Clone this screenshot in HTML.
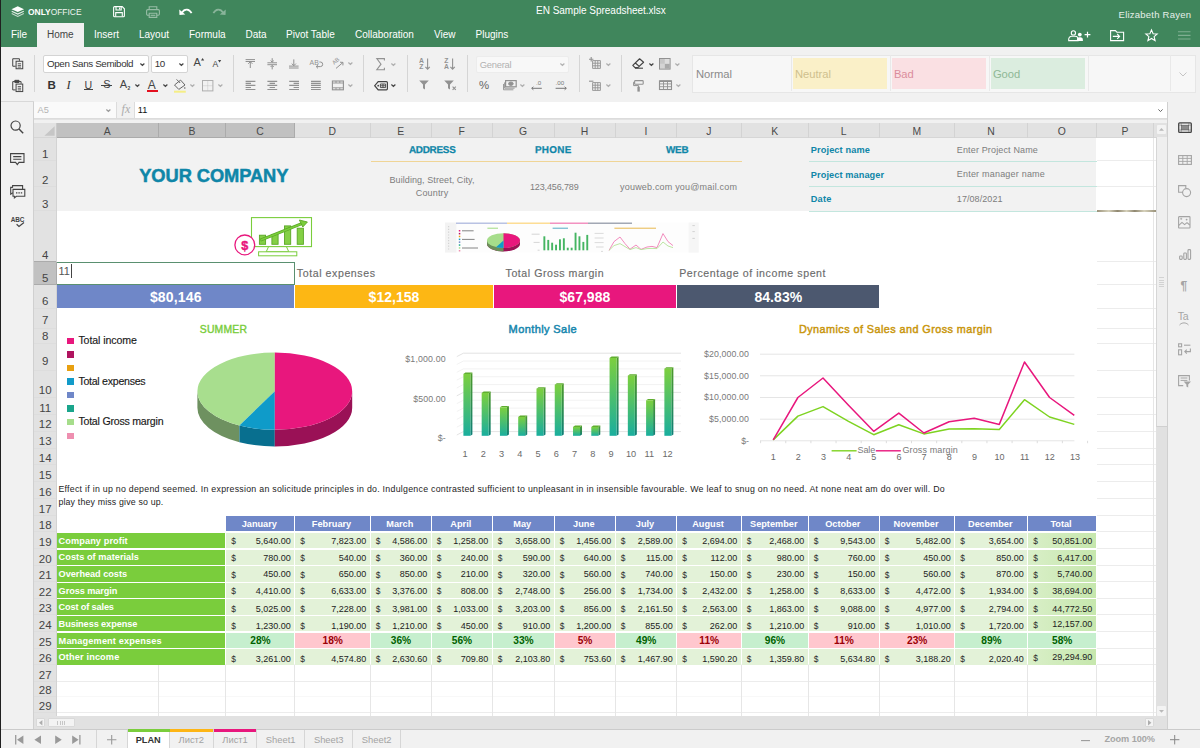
<!DOCTYPE html>
<html><head><meta charset="utf-8"><title>EN Sample Spreadsheet.xlsx</title>
<style>
*{box-sizing:border-box;margin:0;padding:0}
html,body{width:1200px;height:748px;overflow:hidden}
body{position:relative;background:#f1f1f1;font-family:"Liberation Sans",sans-serif;font-size:10px;color:#444;-webkit-font-smoothing:antialiased}
.abs{position:absolute}
.t{position:absolute;white-space:nowrap;line-height:1}
svg{position:absolute;overflow:visible}

#hdr{left:0;top:0;width:1200px;height:47px;background:#40865c}
#edge{left:0;top:0;width:1.3px;height:748px;background:#202020;z-index:50}
.tab{color:#fff;font-size:10px;top:30.1px}
#hometab{left:37px;top:23px;width:46.5px;height:24px;background:#f1f1f1}
#tb{left:0;top:47px;width:1200px;height:54.5px;background:#f1f1f1;border-bottom:1px solid #d8d8d8}
.sep{width:1px;background:#d5d5d5;top:55px;height:37px}
.box{background:#fff;border:1px solid #d4d4d4;border-radius:2px}
.dis{opacity:.55}
.dis2{opacity:.38}
.dis3{opacity:.44}
#fbar{left:34px;top:101px;width:1166px;height:22px;background:#f1f1f1}
#lsb{left:0;top:101.6px;width:34px;height:627.4px;background:#f1f1f1;border-right:1px solid #d0d0d0}
#rsb{left:1167px;top:101.6px;width:33px;height:627.4px;background:#f1f1f1;border-left:1px solid #d0d0d0}
#sbar{left:0;top:729px;width:1200px;height:19px;background:#f1f1f1;border-top:1px solid #cbcbcb}
.stab{top:730px;height:18px;font-size:9.4px;color:#a3a3a3;text-align:center;line-height:20.6px;border-right:1px solid #d6d6d6}

#sheet{left:34px;top:123px;width:1122px;height:594px;background:#fff;overflow:hidden}
.ch{top:123px;height:15px;background:#e2e2e2;border-right:1px solid #d3d3d3;border-bottom:1px solid #cfcfcf}
.rh{left:34px;width:22.9px;background:#e3e3e3;border-bottom:1px solid #dddddd;border-right:1px solid #d3d3d3}
.hl{height:1px;background:#ececec}
.vl{width:1px;background:#e6e6e6}
.c{position:absolute}

</style></head>
<body>
<div class="abs" id="hdr"></div>
<svg style="left:11px;top:5.5px;" width="13.5" height="11" viewBox="0 0 13.5 11"><path d="M6.75 0.3 L13 3.2 L6.75 6.1 L0.5 3.2 Z" fill="#fff"/><path d="M0.7 5.3 L6.75 8.1 L12.8 5.3" fill="none" stroke="#fff" stroke-opacity=".85" stroke-width="1.1"/><path d="M0.7 7.6 L6.75 10.4 L12.8 7.6" fill="none" stroke="#fff" stroke-opacity=".7" stroke-width="1.1"/></svg>
<div class="t" style="left:27.5px;top:6.9px;font-size:9.7px;color:#fff;transform-origin:0 0;transform:scaleX(.87)"><b>ONLY</b><span style="opacity:.92">OFFICE</span></div>
<svg style="left:112.8px;top:5.7px;" width="12" height="11.4" viewBox="0 0 12 11.4"><path d="M0.6 1.6 a1 1 0 0 1 1-1 H9.2 L11.4 2.8 V9.8 a1 1 0 0 1-1 1 H1.6 a1 1 0 0 1-1-1Z" fill="none" stroke="#fff" stroke-width="1.1"/><path d="M3 0.8 V4 H8.2 V0.8 M6.6 1.4 V3.2" fill="none" stroke="#fff" stroke-width="1.1"/><path d="M2.7 10.6 V6.6 H9.3 V10.6" fill="none" stroke="#fff" stroke-width="1.1"/></svg>
<svg style="left:145.5px;top:5.5px;" width="14" height="12" viewBox="0 0 14 12"><g opacity=".45" fill="none" stroke="#fff" stroke-width="1.1"><path d="M3.2 3.6 V0.8 H10.8 V3.6"/><rect x="0.6" y="3.6" width="12.8" height="5.6" rx="1.2"/><path d="M3.2 7.2 H10.8 V11.4 H3.2 Z" fill="#40865c"/><path d="M4.6 9.3 H9.4"/></g></svg>
<svg style="left:179.3px;top:8.4px;" width="13" height="7.2" viewBox="0 0 13 7.2"><path d="M0.2 1.4 L0.5 6.9 L6.3 6.6 Z" fill="#fff"/><path d="M3 4.6 C5.6 0.2 10.4 0.8 12.6 5.2" fill="none" stroke="#fff" stroke-width="1.7"/></svg>
<svg style="left:213.4px;top:8.4px;" width="13" height="7.2" viewBox="0 0 13 7.2"><g transform="translate(13,0) scale(-1,1)" opacity=".38"><path d="M0.2 1.4 L0.5 6.9 L6.3 6.6 Z" fill="#fff"/><path d="M3 4.6 C5.6 0.2 10.4 0.8 12.6 5.2" fill="none" stroke="#fff" stroke-width="1.7"/></g></svg>
<div class="t" style="left:536.00px;top:6.04px;font-size:10px;color:#fff;letter-spacing:-0.010px;">EN Sample Spreadsheet.xlsx</div>
<div class="t" style="left:1118.60px;top:10.06px;font-size:9.5px;color:#e6efe9;letter-spacing:0.228px;">Elizabeth Rayen</div>
<svg style="left:1068px;top:29.5px;" width="23" height="11.5" viewBox="0 0 23 11.5"><g fill="none" stroke="#fff" stroke-width="1.1"><circle cx="5.4" cy="2.9" r="2.1"/><path d="M0.7 10.6 V9.3 a3 3 0 0 1 3-3 H7.1 a3 3 0 0 1 3 3 V10.6 Z"/></g><circle cx="11.8" cy="4.6" r="1.9" fill="#fff"/><path d="M8.9 11 V9.9 a2.6 2.6 0 0 1 2.6-2.6 h0.8 a2.6 2.6 0 0 1 2.6 2.6 V11 Z" fill="#fff"/><path d="M19.5 1.8 V7.6 M16.6 4.7 H22.4" stroke="#fff" stroke-width="1.2"/></svg>
<svg style="left:1110px;top:29.8px;" width="14.5" height="11.5" viewBox="0 0 14.5 11.5"><path d="M0.6 10.6 V0.6 H5.4 L6.9 2.2 H13.6 V10.6 Z" fill="none" stroke="#fff" stroke-width="1.1"/><path d="M2.8 6.4 H9.4 M7.2 4 L9.6 6.4 L7.2 8.8" fill="none" stroke="#fff" stroke-width="1.1"/></svg>
<svg style="left:1144.5px;top:28.8px;" width="13" height="12.4" viewBox="0 0 13 12.4"><path d="M6.5 0.9 L8.1 4.7 L12.2 5 L9.1 7.7 L10.1 11.7 L6.5 9.5 L2.9 11.7 L3.9 7.7 L0.8 5 L4.9 4.7 Z" fill="none" stroke="#fff" stroke-width="1.1" stroke-linejoin="miter"/></svg>
<svg style="left:1178px;top:31px;" width="12.5" height="9" viewBox="0 0 12.5 9"><path d="M0 0.8 H12.5 M0 4.4 H12.5 M0 8 H12.5" stroke="#fff" stroke-opacity=".33" stroke-width="1.1"/></svg>
<div class="abs" id="hometab"></div>
<div class="t tab" style="left:11px;color:#fff">File</div>
<div class="t tab" style="left:47px;color:#444">Home</div>
<div class="t tab" style="left:94px;color:#fff">Insert</div>
<div class="t tab" style="left:139px;color:#fff">Layout</div>
<div class="t tab" style="left:189px;color:#fff">Formula</div>
<div class="t tab" style="left:245.5px;color:#fff">Data</div>
<div class="t tab" style="left:286px;color:#fff">Pivot Table</div>
<div class="t tab" style="left:355px;color:#fff">Collaboration</div>
<div class="t tab" style="left:434px;color:#fff">View</div>
<div class="t tab" style="left:475.5px;color:#fff">Plugins</div>
<div class="abs" id="tb"></div>
<div class="abs sep" style="left:34px"></div>
<div class="abs sep" style="left:233.2px"></div>
<div class="abs sep" style="left:363.2px"></div>
<div class="abs sep" style="left:406.8px"></div>
<div class="abs sep" style="left:466.6px"></div>
<div class="abs sep" style="left:578.6px"></div>
<div class="abs sep" style="left:621.2px"></div>
<svg style="left:9.07px;top:55.27px;" width="16.66" height="16.66" viewBox="0 0 20 20"><g fill="none" stroke="#444" stroke-width="1.2"><path d="M12.5 7 V4.5 H4.5 V13.5 H8"/><rect x="8.5" y="7.5" width="8" height="9" fill="#f1f1f1"/><path d="M10.5 10.5h4M10.5 12.5h4M10.5 14.5h4" stroke-width="1"/></g></svg>
<svg style="left:9.07px;top:76.67px;" width="16.66" height="16.66" viewBox="0 0 20 20"><g fill="none" stroke="#444" stroke-width="1.2"><path d="M8 15.5 H4.5 V5.5 H14.5 V8"/><path d="M7 4 H12 V6.5 H7Z" fill="#444"/><rect x="8.5" y="8.5" width="8" height="9" fill="#f1f1f1"/><path d="M10.5 11.5h4M10.5 13.5h4M10.5 15.5h4" stroke-width="1"/></g></svg>
<div class="abs box" style="left:43.4px;top:55.4px;width:105.2px;height:17.4px"></div>
<div class="t" style="left:47.00px;top:59.40px;font-size:9.8px;color:#333;letter-spacing:-0.356px;">Open Sans Semibold</div>
<svg style="left:140.2px;top:63.0px;" width="4.8" height="3.2" viewBox="0 0 4.8 3.2"><path d="M0.4 0.5 L2.4 2.5 L4.4 0.5" fill="none" stroke="#444" stroke-width="1.2"/></svg>
<div class="abs box" style="left:151.4px;top:55.4px;width:36.8px;height:17.4px"></div>
<div class="t" style="left:154.80px;top:59.40px;font-size:9.8px;color:#333;letter-spacing:-0.450px;">10</div>
<svg style="left:179.1px;top:63.0px;" width="4.8" height="3.2" viewBox="0 0 4.8 3.2"><path d="M0.4 0.5 L2.4 2.5 L4.4 0.5" fill="none" stroke="#444" stroke-width="1.2"/></svg>
<div class="t" style="left:193.40px;top:57.49px;font-size:11px;color:#444;">A</div>
<svg style="left:200.6px;top:58.4px;" width="3.2" height="2.4" viewBox="0 0 3.2 2.4"><path d="M0 2.4 L1.6 0 L3.2 2.4Z" fill="#444"/></svg>
<div class="t" style="left:212.60px;top:59.52px;font-size:8.6px;color:#444;">A</div>
<svg style="left:218.4px;top:59.6px;" width="3.2" height="2.4" viewBox="0 0 3.2 2.4"><path d="M0 0 L1.6 2.4 L3.2 0Z" fill="#444"/></svg>
<div class="t" style="left:47.4px;top:79.4px;font-size:11.6px;font-weight:bold;color:#333">B</div>
<div class="t" style="left:66.6px;top:78.8px;font-size:12.4px;font-style:italic;font-family:'Liberation Serif',serif;color:#333">I</div>
<div class="t" style="left:84.4px;top:80px;font-size:10.6px;color:#444">U</div>
<div class="abs" style="left:84px;top:89.2px;width:8.8px;height:1px;background:#444"></div>
<div class="t" style="left:103.2px;top:79.4px;font-size:11px;color:#444">S</div>
<div class="abs" style="left:101.4px;top:84.8px;width:10.6px;height:1px;background:#444"></div>
<div class="t" style="left:119.8px;top:79.4px;font-size:11px;color:#444">A</div>
<div class="t" style="left:127.4px;top:86px;font-size:5px;font-weight:bold;color:#444">2</div>
<svg style="left:135.0px;top:84.1px;" width="4.8" height="3.2" viewBox="0 0 4.8 3.2"><path d="M0.4 0.5 L2.4 2.5 L4.4 0.5" fill="none" stroke="#444" stroke-width="1.2"/></svg>
<div class="t" style="left:147.8px;top:78.6px;font-size:12px;color:#444">A</div>
<div class="abs" style="left:146.6px;top:89.6px;width:11.4px;height:2.4px;background:#e3101f"></div>
<svg style="left:162.79999999999998px;top:84.1px;" width="4.8" height="3.2" viewBox="0 0 4.8 3.2"><path d="M0.4 0.5 L2.4 2.5 L4.4 0.5" fill="none" stroke="#444" stroke-width="1.2"/></svg>
<svg style="left:174px;top:78.6px;" width="14" height="14" viewBox="0 0 14 14"><g opacity=".8"><path d="M6.6 1.1 L11 6 L4.8 10.4 L0.5 6 Z" fill="none" stroke="#444" stroke-width="1"/><path d="M2.6 0.4 L6.2 4" stroke="#444" stroke-width="1"/><circle cx="10.8" cy="9" r=".8" fill="#444"/></g><rect x="0" y="11.7" width="11.8" height="2" fill="#f5ee86"/></svg>
<svg class="dis2" style="left:190.4px;top:84.1px;" width="4.8" height="3.2" viewBox="0 0 4.8 3.2"><path d="M0.4 0.5 L2.4 2.5 L4.4 0.5" fill="none" stroke="#444" stroke-width="1.2"/></svg>
<svg style="left:202.2px;top:79.8px;" width="11.4" height="11.4" viewBox="0 0 11.4 11.4"><g class="dis2" fill="none" stroke="#444"><rect x="0.5" y="0.5" width="10.4" height="10.4" stroke-width="1"/><path d="M5.7 0.5V10.9M0.5 5.7H10.9" stroke-width=".6" opacity=".5"/></g></svg>
<svg class="dis2" style="left:217.79999999999998px;top:84.1px;" width="4.8" height="3.2" viewBox="0 0 4.8 3.2"><path d="M0.4 0.5 L2.4 2.5 L4.4 0.5" fill="none" stroke="#444" stroke-width="1.2"/></svg>
<svg style="left:240px;top:56px;" width="115" height="38" viewBox="240 56 115 38"><g class="dis" stroke="#444" fill="none" stroke-width="1"><path d="M245.6 59.6H255M245.6 61.5H255M250.3 61.5V68M248.2 63.8L250.3 61.7L252.4 63.8"/><path d="M267.4 62.8H277M267.4 64.7H277M272.2 58.2V62M270.6 60.6L272.2 62.2L273.8 60.6M272.2 69.4V65.6M270.6 67L272.2 65.4L273.8 67"/><path d="M289 66.1H298.6M289 68H298.6M293.8 59.4V65.6M291.7 63.6L293.8 65.7L295.9 63.6"/><text x="309.6" y="64.6" font-size="6.9" font-family="Liberation Sans" fill="#444" stroke="none">AB</text><path d="M319.4 62H320.4a2.3 2.3 0 0 1 0 4.6H316.4M318 64.8L316.2 66.6L318 68.4"/><text transform="translate(334.2,65) rotate(-42)" font-size="5.8" font-family="Liberation Sans" fill="#444" stroke="none">AB</text><path d="M336 68.4L342.8 62.6M340 62.2L343 62.4L342.9 65.4"/><path d="M245.6 81.3H255.4M245.6 83.35H251M245.6 85.4H255.4M245.6 87.45H251M245.6 89.5H255.4" stroke-width="1.15"/><path d="M267.4 81.3H277.2M269.6 83.35H275M267.4 85.4H277.2M269.6 87.45H275M267.4 89.5H277.2" stroke-width="1.15"/><path d="M289.2 81.3H299M293.6 83.35H299M289.2 85.4H299M293.6 87.45H299M289.2 89.5H299" stroke-width="1.15"/><path d="M311 81.3H320.8M311 83.35H320.8M311 85.4H320.8M311 87.45H320.8M311 89.5H320.8" stroke-width="1.15"/><rect x="332.4" y="81" width="11" height="8.8" stroke-width="1.1"/><path d="M332.4 83H343.4M332.4 87.8H343.4M336 81V83M339.8 81V83M336 87.8V89.8M339.8 87.8V89.8" stroke-width=".9"/></g></svg>
<svg class="dis2" style="left:347.6px;top:62.3px;" width="4.8" height="3.2" viewBox="0 0 4.8 3.2"><path d="M0.4 0.5 L2.4 2.5 L4.4 0.5" fill="none" stroke="#444" stroke-width="1.2"/></svg>
<svg class="dis2" style="left:347.6px;top:83.9px;" width="4.8" height="3.2" viewBox="0 0 4.8 3.2"><path d="M0.4 0.5 L2.4 2.5 L4.4 0.5" fill="none" stroke="#444" stroke-width="1.2"/></svg>
<svg style="left:376.4px;top:58px;" width="9" height="12.4" viewBox="0 0 9 12.4"><path class="dis" d="M8.4 2.6V0.6H0.8L5 6.2L0.8 11.8H8.4V9.8" fill="none" stroke="#444" stroke-width="1.1"/></svg>
<svg class="dis2" style="left:390.8px;top:62.7px;" width="4.8" height="3.2" viewBox="0 0 4.8 3.2"><path d="M0.4 0.5 L2.4 2.5 L4.4 0.5" fill="none" stroke="#444" stroke-width="1.2"/></svg>
<svg style="left:374.4px;top:80.6px;" width="14" height="9.4" viewBox="0 0 14 9.4"><path d="M4.2 0.6H12.4a1 1 0 0 1 1 1V7.8a1 1 0 0 1-1 1H4.2L0.7 4.7Z" fill="none" stroke="#444" stroke-width="1.2"/><circle cx="4.2" cy="4.7" r=".9" fill="#444"/><path d="M6.4 3H11.6V6.6H6.4Z M6.4 4.8H11.6 M9 3V6.6" fill="none" stroke="#444" stroke-width=".9"/></svg>
<svg style="left:390.8px;top:84.1px;" width="4.8" height="3.2" viewBox="0 0 4.8 3.2"><path d="M0.4 0.5 L2.4 2.5 L4.4 0.5" fill="none" stroke="#444" stroke-width="1.2"/></svg>
<svg style="left:418.6px;top:57.6px;" width="12" height="12.6" viewBox="0 0 12 12.6"><g class="dis"><text x="0" y="5.3" font-size="6.8" font-weight="bold" font-family="Liberation Sans" fill="#444">A</text><text x="0.2" y="11.4" font-size="6.8" font-weight="bold" font-family="Liberation Sans" fill="#444">Z</text><path d="M8.6 0.4V11M6.4 8.8L8.6 11.2L10.8 8.8" fill="none" stroke="#444" stroke-width="1.1"/></g></svg>
<svg style="left:444.4px;top:57.6px;" width="12" height="12.6" viewBox="0 0 12 12.6"><g class="dis"><text x="0.2" y="5.3" font-size="6.8" font-weight="bold" font-family="Liberation Sans" fill="#444">Z</text><text x="0" y="11.4" font-size="6.8" font-weight="bold" font-family="Liberation Sans" fill="#444">A</text><path d="M8.6 0.4V11M6.4 8.8L8.6 11.2L10.8 8.8" fill="none" stroke="#444" stroke-width="1.1"/></g></svg>
<svg style="left:419.4px;top:80.4px;" width="10" height="9.6" viewBox="0 0 10 9.6"><path class="dis" d="M0.2 0.4H9.8L6 4.6V9.4L4 8.2V4.6Z" fill="#444"/></svg>
<svg style="left:444.2px;top:80.4px;" width="13" height="10.4" viewBox="0 0 13 10.4"><g class="dis"><path d="M0.2 0.4H9.8L6 4.6V9.4L4 8.2V4.6Z" fill="#444"/><path d="M8.6 6.6L11.8 9.8M11.8 6.6L8.6 9.8" stroke="#444" stroke-width="1.1"/></g></svg>
<div class="abs box" style="left:476.4px;top:55.6px;width:92.8px;height:17px;background:#f8f8f8;border-color:#ececec"></div>
<div class="t" style="left:479.80px;top:59.54px;font-size:9.4px;color:#444;letter-spacing:-0.263px;opacity:.4;">General</div>
<svg class="dis2" style="left:560.4px;top:63.099999999999994px;" width="4.8" height="3.2" viewBox="0 0 4.8 3.2"><path d="M0.4 0.5 L2.4 2.5 L4.4 0.5" fill="none" stroke="#444" stroke-width="1.2"/></svg>
<div class="t" style="left:479.00px;top:79.95px;font-size:11.4px;color:#666;">%</div>
<svg style="left:503.2px;top:80.2px;" width="13" height="10.4" viewBox="0 0 13 10.4"><g class="dis" fill="none" stroke="#444" stroke-width="1"><rect x="2.6" y="0.6" width="10.6" height="6.2" stroke-width="1.2"/><path d="M1.6 2.4V8.2H11.6M0.5 4V9.8H10.4" stroke-width=".9"/><ellipse cx="7.9" cy="3.7" rx="2.3" ry="1.7" fill="#444"/></g></svg>
<svg class="dis2" style="left:520.2px;top:84.1px;" width="4.8" height="3.2" viewBox="0 0 4.8 3.2"><path d="M0.4 0.5 L2.4 2.5 L4.4 0.5" fill="none" stroke="#444" stroke-width="1.2"/></svg>
<svg style="left:531px;top:79.6px;" width="12" height="11" viewBox="0 0 12 11"><g opacity=".7"><text x="5" y="5.4" font-size="6.2" font-family="Liberation Sans" fill="#444">.0</text><path d="M10.8 8.3H0.8M2.4 6.8L0.7 8.3L2.4 9.8" fill="none" stroke="#444" stroke-width="1"/></g></svg>
<svg style="left:555.4px;top:79.6px;" width="13" height="11" viewBox="0 0 13 11"><g opacity=".7"><text x="0.6" y="5.4" font-size="6.2" font-family="Liberation Sans" fill="#444">.00</text><path d="M0.6 8.3H11.2M9.6 6.8L11.3 8.3L9.6 9.8" fill="none" stroke="#444" stroke-width="1"/></g></svg>
<svg style="left:588.8px;top:56.9px;" width="12" height="12" viewBox="0 0 12 12"><g class="dis"><path d="M3.6 3.6H11.4V11.4H3.6ZM3.6 6.2H11.4M3.6 8.8H11.4M6.2 3.6V11.4M8.8 3.6V11.4" fill="none" stroke="#444" stroke-width=".9"/><path d="M0 2.2H4.4M2.2 0V4.4" stroke="#444" stroke-width="1.1"/></g></svg>
<svg class="dis2" style="left:605.8000000000001px;top:62.7px;" width="4.8" height="3.2" viewBox="0 0 4.8 3.2"><path d="M0.4 0.5 L2.4 2.5 L4.4 0.5" fill="none" stroke="#444" stroke-width="1.2"/></svg>
<svg style="left:588.8px;top:78.5px;" width="12" height="12" viewBox="0 0 12 12"><g class="dis"><path d="M3.6 3.6H11.4V11.4H3.6ZM3.6 6.2H11.4M3.6 8.8H11.4M6.2 3.6V11.4M8.8 3.6V11.4" fill="none" stroke="#444" stroke-width=".9"/><path d="M0 2.2H4.4" stroke="#444" stroke-width="1.1"/></g></svg>
<svg class="dis2" style="left:605.8000000000001px;top:84.1px;" width="4.8" height="3.2" viewBox="0 0 4.8 3.2"><path d="M0.4 0.5 L2.4 2.5 L4.4 0.5" fill="none" stroke="#444" stroke-width="1.2"/></svg>
<svg style="left:632.4px;top:58.2px;" width="12.4" height="11" viewBox="0 0 12.4 11"><path d="M7.6 0.8L11.6 4.2L5.8 9.6H3L0.8 7.4Z M3.4 5 L7.2 8.4" fill="none" stroke="#444" stroke-width="1.2" stroke-linejoin="round"/><path d="M3 10.2H11" stroke="#444" stroke-width="1.1"/></svg>
<svg style="left:649.0px;top:62.900000000000006px;" width="4.8" height="3.2" viewBox="0 0 4.8 3.2"><path d="M0.4 0.5 L2.4 2.5 L4.4 0.5" fill="none" stroke="#444" stroke-width="1.2"/></svg>
<svg style="left:659.2px;top:58px;" width="11.6" height="11.6" viewBox="0 0 11.6 11.6"><g class="dis"><rect x="0.5" y="0.5" width="10.6" height="10.6" fill="none" stroke="#444"/><rect x="1" y="1" width="4.8" height="4.8" fill="#444" opacity=".45"/><rect x="5.8" y="1" width="4.8" height="4.8" fill="#444" opacity=".2"/><rect x="5.8" y="5.8" width="4.8" height="4.8" fill="#444" opacity=".75"/><rect x="1" y="5.8" width="4.8" height="4.8" fill="#444" opacity=".3"/></g></svg>
<svg class="dis2" style="left:675.2px;top:62.900000000000006px;" width="4.8" height="3.2" viewBox="0 0 4.8 3.2"><path d="M0.4 0.5 L2.4 2.5 L4.4 0.5" fill="none" stroke="#444" stroke-width="1.2"/></svg>
<svg style="left:633.4px;top:79.6px;" width="11" height="12" viewBox="0 0 11 12"><g class="dis"><rect x="1.6" y="0.6" width="8.6" height="3.6" rx=".8" fill="none" stroke="#444" stroke-width="1.1"/><path d="M1.6 2.2H0.6V5.6H5.6V7" fill="none" stroke="#444" stroke-width="1"/><rect x="4.4" y="6.8" width="2.4" height="4.8" fill="#444"/></g></svg>
<svg style="left:658.6px;top:80.4px;" width="13" height="10" viewBox="0 0 13 10"><g class="dis" fill="none" stroke="#444"><rect x="0.5" y="0.9" width="12" height="8.6" stroke-width="1.1"/><path d="M0.5 1.2H12.5" stroke-width="1.6"/><path d="M0.5 3.9H12.5M0.5 6.7H12.5M4.5 0.9V9.5M8.5 0.9V9.5" stroke-width=".9"/></g></svg>
<svg class="dis2" style="left:675.6px;top:84.1px;" width="4.8" height="3.2" viewBox="0 0 4.8 3.2"><path d="M0.4 0.5 L2.4 2.5 L4.4 0.5" fill="none" stroke="#444" stroke-width="1.2"/></svg>
<div class="abs" style="left:691.5px;top:54.8px;width:504.5px;height:38px;background:#f7f7f7;border:1px solid #e6e6e6"></div>
<div class="abs" style="left:790.6px;top:55px;width:1px;height:36px;background:#e9e9e9"></div>
<div class="t" style="left:695.90px;top:68.82px;font-size:11.2px;color:#8a8a8a;">Normal</div>
<div class="abs" style="left:889.6px;top:55px;width:1px;height:36px;background:#e9e9e9"></div>
<div class="abs" style="left:793px;top:58.4px;width:94.0px;height:31px;background:#faf0c8"></div>
<div class="t" style="left:794.90px;top:68.82px;font-size:11.2px;color:#cfc08e;">Neutral</div>
<div class="abs" style="left:988.6px;top:55px;width:1px;height:36px;background:#e9e9e9"></div>
<div class="abs" style="left:892px;top:58.4px;width:94.0px;height:31px;background:#fae0e3"></div>
<div class="t" style="left:893.90px;top:68.82px;font-size:11.2px;color:#da8d9c;">Bad</div>
<div class="abs" style="left:1087.6px;top:55px;width:1px;height:36px;background:#e9e9e9"></div>
<div class="abs" style="left:991px;top:58.4px;width:94.0px;height:31px;background:#dbeddf"></div>
<div class="t" style="left:992.90px;top:68.82px;font-size:11.2px;color:#8fb896;">Good</div>
<div class="abs" style="left:1170px;top:55px;width:1px;height:36px;background:#e9e9e9"></div>
<svg style="left:1178.5px;top:72px;" width="8" height="5" viewBox="0 0 8 5"><path d="M0.5 0.5L4 4L7.5 0.5" fill="none" stroke="#c4c4c4" stroke-width="1"/></svg>
<div class="abs" id="fbar"></div>
<div class="abs" style="left:34px;top:102.4px;width:82px;height:16.2px;background:#fafafa;border-bottom:1px solid #dcdcdc"></div>
<div class="t" style="left:37.60px;top:105.91px;font-size:9.2px;color:#b4b4b4;">A5</div>
<svg style="left:106.0px;top:109.1px;" width="4.8" height="3.2" viewBox="0 0 4.8 3.2"><path d="M0.4 0.5 L2.4 2.5 L4.4 0.5" fill="none" stroke="#9a9a9a" stroke-width="1.2"/></svg>
<div class="abs" style="left:116px;top:102.4px;width:18.6px;height:16.2px;background:#f1f1f1;border-left:1px solid #dcdcdc;border-right:1px solid #dcdcdc;border-bottom:1px solid #dcdcdc"></div>
<div class="t" style="left:121.6px;top:103.4px;font-size:12px;font-style:italic;font-family:'Liberation Serif',serif;color:#ababab">fx</div>
<div class="abs" style="left:134.6px;top:102.4px;width:1032.4px;height:16.2px;background:#fff;border-bottom:1px solid #dcdcdc"></div>
<div class="t" style="left:137.80px;top:105.91px;font-size:9.2px;color:#111;">11</div>
<svg style="left:1158.2px;top:109px;" width="5" height="3.2" viewBox="0 0 5 3.2"><path d="M0.4 0.4L2.5 2.6L4.6 0.4" fill="none" stroke="#666" stroke-width="1"/></svg>
<div class="abs" style="left:34px;top:119px;width:1133px;height:1px;background:#e2e2e2"></div>
<div class="abs" id="lsb"></div>
<div class="abs" id="rsb"></div>
<svg style="left:10.4px;top:120.4px;" width="14" height="14" viewBox="0 0 14 14"><circle cx="5.6" cy="5.6" r="4.6" fill="none" stroke="#444" stroke-width="1.2"/><path d="M9 9L13.2 13.2" stroke="#444" stroke-width="1.4"/></svg>
<svg style="left:10px;top:152.6px;" width="14.6" height="13" viewBox="0 0 14.6 13"><path d="M0.6 0.6H14V9.4H9L7.3 11.6L5.6 9.4H0.6Z" fill="none" stroke="#444" stroke-width="1.1"/><path d="M3.2 3.6H11.4M3.2 6.2H11.4" stroke="#444" stroke-width="1.1"/></svg>
<svg style="left:9.6px;top:184.6px;" width="15.4" height="13" viewBox="0 0 15.4 13"><path d="M2.6 2.6V0.6H12.6V7" fill="none" stroke="#444" stroke-width="1.1"/><path d="M0.6 0.6" /><path d="M0.6 1 V9 H2.4" fill="none" stroke="#444" stroke-width="1.1" opacity="0"/><path d="M3 4.4H14.8V11.2H6.4L4.4 12.8V11.2H3Z" fill="#f1f1f1" stroke="#444" stroke-width="1.1"/><path d="M6 7.8h1.4M8.4 7.8h1.4M10.8 7.8h1.4" stroke="#444" stroke-width="1.3"/><path d="M2.8 2.4H0.7V9.2L2.8 7.8" fill="none" stroke="#444" stroke-width="1.1"/></svg>
<div class="t" style="left:10.8px;top:217.2px;font-size:6.4px;font-weight:bold;color:#444;letter-spacing:-.2px">ABC</div>
<svg style="left:15.6px;top:222.2px;" width="7.6" height="4.6" viewBox="0 0 7.6 4.6"><path d="M0.6 2.2L3 4.4L8 0.5" fill="none" stroke="#444" stroke-width="1.2"/></svg>
<svg style="left:1177.6px;top:121.9px;" width="14" height="11.2" viewBox="0 0 14 11.2"><g class="" fill="none" stroke="#444" stroke-width="1.1"><rect x="0.7" y="0.8" width="12.6" height="9.6" rx="1" stroke-width="1.3"/><rect x="3.2" y="3.2" width="7.6" height="4.8" fill="#8c8c8c" stroke="#555" stroke-width=".6"/><path d="M3.2 1.2V3.2M10.8 1.2V3.2M3.2 8V10M10.8 8V10M1.2 3.2H3.2M10.8 3.2H12.8M1.2 8H3.2M10.8 8H12.8" stroke-width=".5" opacity=".8"/></g></svg>
<svg style="left:1177.6px;top:154.5px;" width="14" height="10" viewBox="0 0 14 10"><g class="dis3" fill="none" stroke="#444" stroke-width="1.1"><rect x="0.6" y="0.6" width="12.8" height="8.8"/><path d="M0.6 3.4H13.4M0.6 6.4H13.4M4.8 0.6V9.4M9.2 0.6V9.4" stroke-width=".9"/></g></svg>
<svg style="left:1177.8999999999999px;top:184.60000000000002px;" width="13.4" height="12.4" viewBox="0 0 13.4 12.4"><g class="dis3" fill="none" stroke="#444" stroke-width="1.1"><path d="M5 7.2H0.6V0.6H7.8V3"/><circle cx="8.6" cy="7.6" r="4"/></g></svg>
<svg style="left:1178.3px;top:216.1px;" width="12.6" height="12.6" viewBox="0 0 12.6 12.6"><g class="dis3" fill="none" stroke="#444" stroke-width="1.1"><rect x="0.6" y="0.6" width="11.4" height="11.4" rx=".6"/><path d="M0.8 9.4L4 6.4L6.6 8.6L9 6.6L11.8 9"/><circle cx="8.6" cy="3.6" r=".9" fill="#444" stroke="none"/><path d="M2.2 2.8h2M3.2 1.8v2" stroke-width=".8"/></g></svg>
<svg style="left:1178.5px;top:248.5px;" width="12.2" height="11" viewBox="0 0 12.2 11"><g class="dis3" fill="none" stroke="#444" stroke-width="1.1"><rect x="0.6" y="7" width="2.6" height="3.4" rx=".8"/><rect x="4.8" y="4" width="2.6" height="6.4" rx=".8"/><rect x="9" y="0.6" width="2.6" height="9.8" rx=".8"/></g></svg>
<div class="t dis3" style="left:1180.4px;top:279.6px;font-size:12px;font-weight:bold;color:#444">&para;</div>
<div class="t dis3" style="left:1177.8px;top:311px;font-size:10.6px;color:#444;letter-spacing:-.3px">Ta</div>
<svg style="left:1179.4px;top:322.2px;" width="10" height="3.4" viewBox="0 0 10 3.4"><path class="dis3" d="M0.5 3C3 0.2 7 0.2 9.5 3" fill="none" stroke="#444" stroke-width="1"/></svg>
<svg style="left:1178.1px;top:343.40000000000003px;" width="13" height="12.4" viewBox="0 0 13 12.4"><g class="dis3" fill="none" stroke="#444" stroke-width="1.1"><rect x="0.6" y="0.8" width="3" height="3"/><rect x="0.6" y="6.8" width="3" height="5"/><path d="M6 2.2H12.4"/><path d="M12.4 5.6V8.6H7M8.8 6.6L6.8 8.6L8.8 10.6"/></g></svg>
<svg style="left:1177.8999999999999px;top:374.9px;" width="13.4" height="13" viewBox="0 0 13.4 13"><g class="dis3" fill="none" stroke="#444" stroke-width="1.1"><path d="M5.2 10.6H0.6V0.6H11.4V5.4"/><path d="M2.6 3H9.4M2.6 5.4H9.4" stroke-width="1"/><path d="M5.6 6.6H13L10.2 9.6V12.6L8.4 11.6V9.6Z" fill="#444" stroke="none"/></g></svg>
<div class="abs" id="sbar"></div>
<svg style="left:14.8px;top:735.4px;" width="8.6" height="9.4" viewBox="0 0 8.6 9.4"><path d="M0.7 0V9.4" stroke="#999" stroke-width="1.3"/><path d="M8.4 0.4V9L2 4.7Z" fill="#999"/></svg>
<svg style="left:34px;top:735.4px;" width="7.2" height="9.4" viewBox="0 0 7.2 9.4"><path d="M7 0.4V9L0.4 4.7Z" fill="#999"/></svg>
<svg style="left:54.8px;top:735.4px;" width="7.2" height="9.4" viewBox="0 0 7.2 9.4"><path d="M0.2 0.4V9L6.8 4.7Z" fill="#999"/></svg>
<svg style="left:72.4px;top:735.4px;" width="8.6" height="9.4" viewBox="0 0 8.6 9.4"><path d="M7.9 0V9.4" stroke="#999" stroke-width="1.3"/><path d="M0.2 0.4V9L6.6 4.7Z" fill="#999"/></svg>
<div class="abs" style="left:96.2px;top:730px;width:1px;height:18px;background:#d6d6d6"></div>
<svg style="left:107.4px;top:735.4px;" width="9.4" height="9.4" viewBox="0 0 9.4 9.4"><path d="M4.7 0V9.4M0 4.7H9.4" stroke="#999" stroke-width="1.1"/></svg>
<div class="abs stab" style="left:127.6px;width:42.20000000000002px;background:#fff;color:#333;font-weight:bold;font-size:9.2px;">PLAN</div>
<div class="abs" style="left:127.6px;top:729px;width:42.20000000000002px;height:3px;background:#7acd3c"></div>
<div class="abs stab" style="left:169.8px;width:44.0px;">Лист2</div>
<div class="abs" style="left:169.8px;top:729px;width:43.0px;height:3px;background:#fdb515"></div>
<div class="abs stab" style="left:213.8px;width:43.5px;">Лист1</div>
<div class="abs" style="left:213.8px;top:729px;width:42.5px;height:3px;background:#e8177d"></div>
<div class="abs stab" style="left:257.3px;width:47.80000000000001px;">Sheet1</div>
<div class="abs stab" style="left:305.1px;width:48.299999999999955px;">Sheet3</div>
<div class="abs stab" style="left:353.4px;width:47.5px;">Sheet2</div>
<div class="abs" style="left:127px;top:730px;width:1px;height:18px;background:#d6d6d6"></div>
<svg style="left:1080.6px;top:739.6px;" width="9" height="1.2" viewBox="0 0 9 1.2"><path d="M0 .6H9" stroke="#999" stroke-width="1.1"/></svg>
<div class="t" style="left:1104.60px;top:735.01px;font-size:9.2px;color:#a6a6a6;font-weight:bold;letter-spacing:-0.103px;">Zoom 100%</div>
<svg style="left:1170px;top:735.4px;" width="9.4" height="9.4" viewBox="0 0 9.4 9.4"><path d="M4.7 0V9.4M0 4.7H9.4" stroke="#868686" stroke-width="1"/></svg>
<div class="abs" id="edge"></div><div class="abs" id="sheet"></div>
<div class="abs hl" style="left:1096.5px;top:160px;width:59.09999999999991px"></div>
<div class="abs hl" style="left:1096.5px;top:186px;width:59.09999999999991px"></div>
<div class="abs hl" style="left:1096.5px;top:210px;width:59.09999999999991px"></div>
<div class="abs hl" style="left:1096.5px;top:261px;width:59.09999999999991px"></div>
<div class="abs hl" style="left:1096.5px;top:284px;width:59.09999999999991px"></div>
<div class="abs hl" style="left:1096.5px;top:307.5px;width:59.09999999999991px"></div>
<div class="abs hl" style="left:1096.5px;top:327.6px;width:59.09999999999991px"></div>
<div class="abs hl" style="left:1096.5px;top:343px;width:59.09999999999991px"></div>
<div class="abs hl" style="left:1096.5px;top:369.5px;width:59.09999999999991px"></div>
<div class="abs hl" style="left:1096.5px;top:397px;width:59.09999999999991px"></div>
<div class="abs hl" style="left:1096.5px;top:414px;width:59.09999999999991px"></div>
<div class="abs hl" style="left:1096.5px;top:430.5px;width:59.09999999999991px"></div>
<div class="abs hl" style="left:1096.5px;top:447.5px;width:59.09999999999991px"></div>
<div class="abs hl" style="left:1096.5px;top:464px;width:59.09999999999991px"></div>
<div class="abs hl" style="left:1096.5px;top:481px;width:59.09999999999991px"></div>
<div class="abs hl" style="left:1096.5px;top:497.6px;width:59.09999999999991px"></div>
<div class="abs hl" style="left:1096.5px;top:514.6px;width:59.09999999999991px"></div>
<div class="abs hl" style="left:1096.5px;top:531.4px;width:59.09999999999991px"></div>
<div class="abs hl" style="left:1096.5px;top:548px;width:59.09999999999991px"></div>
<div class="abs hl" style="left:1096.5px;top:564.6px;width:59.09999999999991px"></div>
<div class="abs hl" style="left:1096.5px;top:581.2px;width:59.09999999999991px"></div>
<div class="abs hl" style="left:1096.5px;top:597.8px;width:59.09999999999991px"></div>
<div class="abs hl" style="left:1096.5px;top:614.4px;width:59.09999999999991px"></div>
<div class="abs hl" style="left:1096.5px;top:631px;width:59.09999999999991px"></div>
<div class="abs hl" style="left:1096.5px;top:647.7px;width:59.09999999999991px"></div>
<div class="abs hl" style="left:1096.5px;top:664.3px;width:59.09999999999991px"></div>
<div class="abs hl" style="left:1096.5px;top:680.8px;width:59.09999999999991px"></div>
<div class="abs hl" style="left:1096.5px;top:696.2px;width:59.09999999999991px;opacity:.35"></div>
<div class="abs hl" style="left:1096.5px;top:711.6px;width:59.09999999999991px"></div>
<div class="abs hl" style="left:1096.5px;top:728px;width:59.09999999999991px"></div>
<div class="abs vl" style="left:1153.2px;top:138px;height:579px"></div>
<div class="abs hl" style="left:56.9px;top:664.3px;width:1039.6px;opacity:.6"></div>
<div class="abs hl" style="left:56.9px;top:680.8px;width:1039.6px"></div>
<div class="abs hl" style="left:56.9px;top:696.2px;width:1039.6px;opacity:.35"></div>
<div class="abs hl" style="left:56.9px;top:711.6px;width:1039.6px"></div>
<div class="abs vl" style="left:157.5px;top:665.3px;height:51.700000000000045px"></div>
<div class="abs vl" style="left:225px;top:665.3px;height:51.700000000000045px"></div>
<div class="abs vl" style="left:294px;top:665.3px;height:51.700000000000045px"></div>
<div class="abs vl" style="left:369.5px;top:665.3px;height:51.700000000000045px"></div>
<div class="abs vl" style="left:430.5px;top:665.3px;height:51.700000000000045px"></div>
<div class="abs vl" style="left:491.5px;top:665.3px;height:51.700000000000045px"></div>
<div class="abs vl" style="left:553.5px;top:665.3px;height:51.700000000000045px"></div>
<div class="abs vl" style="left:614.5px;top:665.3px;height:51.700000000000045px"></div>
<div class="abs vl" style="left:676px;top:665.3px;height:51.700000000000045px"></div>
<div class="abs vl" style="left:740.5px;top:665.3px;height:51.700000000000045px"></div>
<div class="abs vl" style="left:807.5px;top:665.3px;height:51.700000000000045px"></div>
<div class="abs vl" style="left:878.5px;top:665.3px;height:51.700000000000045px"></div>
<div class="abs vl" style="left:954px;top:665.3px;height:51.700000000000045px"></div>
<div class="abs vl" style="left:1027px;top:665.3px;height:51.700000000000045px"></div>
<div class="abs vl" style="left:1095.5px;top:665.3px;height:51.700000000000045px"></div>
<div class="c" style="left:56.90px;top:138.00px;width:1039.60px;height:73.00px;background:#f2f2f2;"></div>
<div class="t" style="left:139.26px;top:166.71px;font-size:18.3px;color:#0f86a8;font-weight:bold;letter-spacing:-0.078px;-webkit-text-stroke:.5px #0f86a8;">YOUR COMPANY</div>
<div class="t" style="left:408.67px;top:145.00px;font-size:9.9px;color:#0f86a8;font-weight:bold;letter-spacing:-0.258px;-webkit-text-stroke:.25px #0f86a8;transform:rotate(.03deg);transform-origin:0 86%;">ADDRESS</div>
<div class="t" style="left:534.74px;top:145.00px;font-size:9.9px;color:#0f86a8;font-weight:bold;letter-spacing:0.279px;-webkit-text-stroke:.25px #0f86a8;transform:rotate(.03deg);transform-origin:0 86%;">PHONE</div>
<div class="t" style="left:665.72px;top:145.00px;font-size:9.9px;color:#0f86a8;font-weight:bold;letter-spacing:-0.266px;-webkit-text-stroke:.25px #0f86a8;transform:rotate(.03deg);transform-origin:0 86%;">WEB</div>
<div class="c" style="left:370.50px;top:160.50px;width:371.00px;height:1.20px;background:#f0d596;"></div>
<div class="t" style="left:389.54px;top:176.38px;font-size:9px;color:#7d7d7d;letter-spacing:0.071px;">Building, Street, City,</div>
<div class="t" style="left:415.78px;top:189.28px;font-size:9px;color:#7d7d7d;letter-spacing:0.155px;">Country</div>
<div class="t" style="left:529.93px;top:182.58px;font-size:9px;color:#7d7d7d;letter-spacing:-0.132px;">123,456,789</div>
<div class="t" style="left:620.09px;top:182.58px;font-size:9px;color:#7d7d7d;letter-spacing:0.188px;">youweb.com you@mail.com</div>
<div class="c" style="left:808.5px;top:160.8px;width:288px;height:0;border-top:1px solid #c3e6de"></div>
<div class="c" style="left:808.5px;top:186.2px;width:288px;height:0;border-top:1px solid #c3e6de"></div>
<div class="c" style="left:808.5px;top:210.6px;width:288px;height:0;border-top:1px solid #c3e6de"></div>
<div class="t" style="left:810.80px;top:146.31px;font-size:9.2px;color:#0f86a8;font-weight:bold;letter-spacing:0.118px;">Project name</div>
<div class="t" style="left:810.80px;top:170.51px;font-size:9.2px;color:#0f86a8;font-weight:bold;letter-spacing:0.094px;">Project manager</div>
<div class="t" style="left:810.80px;top:195.41px;font-size:9.2px;color:#0f86a8;font-weight:bold;letter-spacing:0.190px;">Date</div>
<div class="t" style="left:956.80px;top:145.88px;font-size:9px;color:#7d7d7d;letter-spacing:0.148px;">Enter Project Name</div>
<div class="t" style="left:956.80px;top:170.08px;font-size:9px;color:#7d7d7d;letter-spacing:0.203px;">Enter manager name</div>
<div class="t" style="left:956.80px;top:195.28px;font-size:9px;color:#7d7d7d;letter-spacing:0.076px;">17/08/2021</div>
<div class="c" style="left:1096.5px;top:210.4px;width:59px;height:1.2px;background:linear-gradient(90deg,#9a927a,#d6d1bb 20%,#8f8770 35%,#d6d1bb 50%,#8f8770 64%,#d6d1bb 80%,#9a927a)"></div>
<div class="c" style="left:56.9px;top:261.8px;width:238.2px;height:23.2px;background:#fff;border:1px solid #5a9070;border-left:none"></div>
<div class="t" style="left:58.40px;top:266.49px;font-size:11px;color:#555;">11</div>
<div class="c" style="left:70.6px;top:264px;width:1.1px;height:14.4px;background:#444"></div>
<div class="t" style="left:296.80px;top:268.43px;font-size:10.6px;color:#6b6b6b;letter-spacing:0.578px;-webkit-text-stroke:.15px #6b6b6b;">Total expenses</div>
<div class="t" style="left:505.60px;top:268.43px;font-size:10.6px;color:#6b6b6b;letter-spacing:0.536px;-webkit-text-stroke:.15px #6b6b6b;">Total Gross margin</div>
<div class="t" style="left:679.20px;top:268.43px;font-size:10.6px;color:#6b6b6b;letter-spacing:0.577px;-webkit-text-stroke:.15px #6b6b6b;">Percentage of income spent</div>
<div class="c" style="left:56.90px;top:285.20px;width:237.50px;height:23.20px;background:#6f87c8;"></div>
<div class="t" style="left:149.88px;top:289.95px;font-size:14px;color:#fff;font-weight:bold;letter-spacing:0.156px;">$80,146</div>
<div class="c" style="left:295.40px;top:285.20px;width:197.20px;height:23.20px;background:#fdb714;"></div>
<div class="t" style="left:368.61px;top:289.95px;font-size:14px;color:#fff;font-weight:bold;letter-spacing:0.028px;">$12,158</div>
<div class="c" style="left:493.60px;top:285.20px;width:182.60px;height:23.20px;background:#e8177d;"></div>
<div class="t" style="left:559.51px;top:289.95px;font-size:14px;color:#fff;font-weight:bold;letter-spacing:0.028px;">$67,988</div>
<div class="c" style="left:677.40px;top:285.20px;width:201.80px;height:23.20px;background:#4c586f;"></div>
<div class="t" style="left:754.43px;top:289.95px;font-size:14px;color:#fff;font-weight:bold;letter-spacing:0.053px;">84.83%</div>
<div class="t" style="left:58.40px;top:484.75px;font-size:8.8px;color:#1c1c1c;letter-spacing:0.265px;">Effect if in up no depend seemed. In expression an solicitude principles in do. Indulgence contrasted sufficient to unpleasant in in insensible favourable. We leaf to snug on no need. At none neat am do over will. Do</div>
<div class="t" style="left:58.40px;top:497.55px;font-size:8.8px;color:#1c1c1c;letter-spacing:0.163px;">play they miss give so up.</div>
<div class="c" style="left:226.30px;top:516.20px;width:68.20px;height:15.00px;background:#6f87c8;"></div>
<div class="t" style="left:241.66px;top:519.61px;font-size:9.2px;color:#fff;font-weight:bold;">January</div>
<div class="c" style="left:295.30px;top:516.20px;width:74.70px;height:15.00px;background:#6f87c8;"></div>
<div class="t" style="left:311.87px;top:519.61px;font-size:9.2px;color:#fff;font-weight:bold;">February</div>
<div class="c" style="left:370.80px;top:516.20px;width:60.20px;height:15.00px;background:#6f87c8;"></div>
<div class="t" style="left:386.25px;top:519.61px;font-size:9.2px;color:#fff;font-weight:bold;">March</div>
<div class="c" style="left:431.80px;top:516.20px;width:60.20px;height:15.00px;background:#6f87c8;"></div>
<div class="t" style="left:450.32px;top:519.61px;font-size:9.2px;color:#fff;font-weight:bold;">April</div>
<div class="c" style="left:492.80px;top:516.20px;width:61.20px;height:15.00px;background:#6f87c8;"></div>
<div class="t" style="left:513.35px;top:519.61px;font-size:9.2px;color:#fff;font-weight:bold;">May</div>
<div class="c" style="left:554.80px;top:516.20px;width:60.20px;height:15.00px;background:#6f87c8;"></div>
<div class="t" style="left:573.06px;top:519.61px;font-size:9.2px;color:#fff;font-weight:bold;">June</div>
<div class="c" style="left:615.80px;top:516.20px;width:60.70px;height:15.00px;background:#6f87c8;"></div>
<div class="t" style="left:635.85px;top:519.61px;font-size:9.2px;color:#fff;font-weight:bold;">July</div>
<div class="c" style="left:677.30px;top:516.20px;width:63.70px;height:15.00px;background:#6f87c8;"></div>
<div class="t" style="left:692.21px;top:519.61px;font-size:9.2px;color:#fff;font-weight:bold;">August</div>
<div class="c" style="left:741.80px;top:516.20px;width:66.20px;height:15.00px;background:#6f87c8;"></div>
<div class="t" style="left:750.02px;top:519.61px;font-size:9.2px;color:#fff;font-weight:bold;">September</div>
<div class="c" style="left:808.80px;top:516.20px;width:70.20px;height:15.00px;background:#6f87c8;"></div>
<div class="t" style="left:825.16px;top:519.61px;font-size:9.2px;color:#fff;font-weight:bold;">October</div>
<div class="c" style="left:879.80px;top:516.20px;width:74.70px;height:15.00px;background:#6f87c8;"></div>
<div class="t" style="left:893.55px;top:519.61px;font-size:9.2px;color:#fff;font-weight:bold;">November</div>
<div class="c" style="left:955.30px;top:516.20px;width:72.20px;height:15.00px;background:#6f87c8;"></div>
<div class="t" style="left:968.05px;top:519.61px;font-size:9.2px;color:#fff;font-weight:bold;">December</div>
<div class="c" style="left:1028.30px;top:516.20px;width:67.70px;height:15.00px;background:#6f87c8;"></div>
<div class="t" style="left:1050.40px;top:519.61px;font-size:9.2px;color:#fff;font-weight:bold;">Total</div>
<div class="c" style="left:56.90px;top:533.00px;width:168.30px;height:15.40px;background:#7acd3c;"></div>
<div class="t" style="left:58.60px;top:536.81px;font-size:9.2px;color:#fff;font-weight:bold;letter-spacing:0.087px;">Company profit</div>
<div class="c" style="left:226.30px;top:533.00px;width:68.20px;height:15.40px;background:#e3f2d8;"></div>
<div class="t" style="left:231.30px;top:537.49px;font-size:8.4px;color:#2a2a2a;">$</div>
<div class="t" style="left:255.77px;top:536.98px;font-size:9px;color:#222;">5,640.00</div>
<div class="c" style="left:295.30px;top:533.00px;width:74.70px;height:15.40px;background:#e3f2d8;"></div>
<div class="t" style="left:300.30px;top:537.49px;font-size:8.4px;color:#2a2a2a;">$</div>
<div class="t" style="left:331.27px;top:536.98px;font-size:9px;color:#222;">7,823.00</div>
<div class="c" style="left:370.80px;top:533.00px;width:60.20px;height:15.40px;background:#e3f2d8;"></div>
<div class="t" style="left:375.80px;top:537.49px;font-size:8.4px;color:#2a2a2a;">$</div>
<div class="t" style="left:392.27px;top:536.98px;font-size:9px;color:#222;">4,586.00</div>
<div class="c" style="left:431.80px;top:533.00px;width:60.20px;height:15.40px;background:#e3f2d8;"></div>
<div class="t" style="left:436.80px;top:537.49px;font-size:8.4px;color:#2a2a2a;">$</div>
<div class="t" style="left:453.27px;top:536.98px;font-size:9px;color:#222;">1,258.00</div>
<div class="c" style="left:492.80px;top:533.00px;width:61.20px;height:15.40px;background:#e3f2d8;"></div>
<div class="t" style="left:497.80px;top:537.49px;font-size:8.4px;color:#2a2a2a;">$</div>
<div class="t" style="left:515.27px;top:536.98px;font-size:9px;color:#222;">3,658.00</div>
<div class="c" style="left:554.80px;top:533.00px;width:60.20px;height:15.40px;background:#e3f2d8;"></div>
<div class="t" style="left:559.80px;top:537.49px;font-size:8.4px;color:#2a2a2a;">$</div>
<div class="t" style="left:576.27px;top:536.98px;font-size:9px;color:#222;">1,456.00</div>
<div class="c" style="left:615.80px;top:533.00px;width:60.70px;height:15.40px;background:#e3f2d8;"></div>
<div class="t" style="left:620.80px;top:537.49px;font-size:8.4px;color:#2a2a2a;">$</div>
<div class="t" style="left:637.77px;top:536.98px;font-size:9px;color:#222;">2,589.00</div>
<div class="c" style="left:677.30px;top:533.00px;width:63.70px;height:15.40px;background:#e3f2d8;"></div>
<div class="t" style="left:682.30px;top:537.49px;font-size:8.4px;color:#2a2a2a;">$</div>
<div class="t" style="left:702.27px;top:536.98px;font-size:9px;color:#222;">2,694.00</div>
<div class="c" style="left:741.80px;top:533.00px;width:66.20px;height:15.40px;background:#e3f2d8;"></div>
<div class="t" style="left:746.80px;top:537.49px;font-size:8.4px;color:#2a2a2a;">$</div>
<div class="t" style="left:769.27px;top:536.98px;font-size:9px;color:#222;">2,468.00</div>
<div class="c" style="left:808.80px;top:533.00px;width:70.20px;height:15.40px;background:#e3f2d8;"></div>
<div class="t" style="left:813.80px;top:537.49px;font-size:8.4px;color:#2a2a2a;">$</div>
<div class="t" style="left:840.27px;top:536.98px;font-size:9px;color:#222;">9,543.00</div>
<div class="c" style="left:879.80px;top:533.00px;width:74.70px;height:15.40px;background:#e3f2d8;"></div>
<div class="t" style="left:884.80px;top:537.49px;font-size:8.4px;color:#2a2a2a;">$</div>
<div class="t" style="left:915.77px;top:536.98px;font-size:9px;color:#222;">5,482.00</div>
<div class="c" style="left:955.30px;top:533.00px;width:72.20px;height:15.40px;background:#e3f2d8;"></div>
<div class="t" style="left:960.30px;top:537.49px;font-size:8.4px;color:#2a2a2a;">$</div>
<div class="t" style="left:988.77px;top:536.98px;font-size:9px;color:#222;">3,654.00</div>
<div class="c" style="left:1028.30px;top:533.00px;width:67.70px;height:15.40px;background:linear-gradient(90deg,#d9efc8,#c6e7ad);"></div>
<div class="t" style="left:1033.30px;top:537.49px;font-size:8.4px;color:#2a2a2a;">$</div>
<div class="t" style="left:1052.26px;top:536.98px;font-size:9px;color:#222;">50,851.00</div>
<div class="c" style="left:56.90px;top:549.60px;width:168.30px;height:15.40px;background:#7acd3c;"></div>
<div class="t" style="left:58.60px;top:553.41px;font-size:9.2px;color:#fff;font-weight:bold;letter-spacing:0.041px;">Costs of materials</div>
<div class="c" style="left:226.30px;top:549.60px;width:68.20px;height:15.40px;background:#e3f2d8;"></div>
<div class="t" style="left:231.30px;top:554.09px;font-size:8.4px;color:#2a2a2a;">$</div>
<div class="t" style="left:263.27px;top:553.58px;font-size:9px;color:#222;">780.00</div>
<div class="c" style="left:295.30px;top:549.60px;width:74.70px;height:15.40px;background:#e3f2d8;"></div>
<div class="t" style="left:300.30px;top:554.09px;font-size:8.4px;color:#2a2a2a;">$</div>
<div class="t" style="left:338.77px;top:553.58px;font-size:9px;color:#222;">540.00</div>
<div class="c" style="left:370.80px;top:549.60px;width:60.20px;height:15.40px;background:#e3f2d8;"></div>
<div class="t" style="left:375.80px;top:554.09px;font-size:8.4px;color:#2a2a2a;">$</div>
<div class="t" style="left:399.77px;top:553.58px;font-size:9px;color:#222;">360.00</div>
<div class="c" style="left:431.80px;top:549.60px;width:60.20px;height:15.40px;background:#e3f2d8;"></div>
<div class="t" style="left:436.80px;top:554.09px;font-size:8.4px;color:#2a2a2a;">$</div>
<div class="t" style="left:460.77px;top:553.58px;font-size:9px;color:#222;">240.00</div>
<div class="c" style="left:492.80px;top:549.60px;width:61.20px;height:15.40px;background:#e3f2d8;"></div>
<div class="t" style="left:497.80px;top:554.09px;font-size:8.4px;color:#2a2a2a;">$</div>
<div class="t" style="left:522.77px;top:553.58px;font-size:9px;color:#222;">590.00</div>
<div class="c" style="left:554.80px;top:549.60px;width:60.20px;height:15.40px;background:#e3f2d8;"></div>
<div class="t" style="left:559.80px;top:554.09px;font-size:8.4px;color:#2a2a2a;">$</div>
<div class="t" style="left:583.77px;top:553.58px;font-size:9px;color:#222;">640.00</div>
<div class="c" style="left:615.80px;top:549.60px;width:60.70px;height:15.40px;background:#e3f2d8;"></div>
<div class="t" style="left:620.80px;top:554.09px;font-size:8.4px;color:#2a2a2a;">$</div>
<div class="t" style="left:645.94px;top:553.58px;font-size:9px;color:#222;">115.00</div>
<div class="c" style="left:677.30px;top:549.60px;width:63.70px;height:15.40px;background:#e3f2d8;"></div>
<div class="t" style="left:682.30px;top:554.09px;font-size:8.4px;color:#2a2a2a;">$</div>
<div class="t" style="left:710.44px;top:553.58px;font-size:9px;color:#222;">112.00</div>
<div class="c" style="left:741.80px;top:549.60px;width:66.20px;height:15.40px;background:#e3f2d8;"></div>
<div class="t" style="left:746.80px;top:554.09px;font-size:8.4px;color:#2a2a2a;">$</div>
<div class="t" style="left:776.77px;top:553.58px;font-size:9px;color:#222;">980.00</div>
<div class="c" style="left:808.80px;top:549.60px;width:70.20px;height:15.40px;background:#e3f2d8;"></div>
<div class="t" style="left:813.80px;top:554.09px;font-size:8.4px;color:#2a2a2a;">$</div>
<div class="t" style="left:847.77px;top:553.58px;font-size:9px;color:#222;">760.00</div>
<div class="c" style="left:879.80px;top:549.60px;width:74.70px;height:15.40px;background:#e3f2d8;"></div>
<div class="t" style="left:884.80px;top:554.09px;font-size:8.4px;color:#2a2a2a;">$</div>
<div class="t" style="left:923.27px;top:553.58px;font-size:9px;color:#222;">450.00</div>
<div class="c" style="left:955.30px;top:549.60px;width:72.20px;height:15.40px;background:#e3f2d8;"></div>
<div class="t" style="left:960.30px;top:554.09px;font-size:8.4px;color:#2a2a2a;">$</div>
<div class="t" style="left:996.27px;top:553.58px;font-size:9px;color:#222;">850.00</div>
<div class="c" style="left:1028.30px;top:549.60px;width:67.70px;height:15.40px;background:linear-gradient(90deg,#d9efc8,#c6e7ad);"></div>
<div class="t" style="left:1033.30px;top:554.09px;font-size:8.4px;color:#2a2a2a;">$</div>
<div class="t" style="left:1057.27px;top:553.58px;font-size:9px;color:#222;">6,417.00</div>
<div class="c" style="left:56.90px;top:566.20px;width:168.30px;height:15.40px;background:#7acd3c;"></div>
<div class="t" style="left:58.60px;top:570.01px;font-size:9.2px;color:#fff;font-weight:bold;letter-spacing:-0.038px;">Overhead costs</div>
<div class="c" style="left:226.30px;top:566.20px;width:68.20px;height:15.40px;background:#e3f2d8;"></div>
<div class="t" style="left:231.30px;top:570.69px;font-size:8.4px;color:#2a2a2a;">$</div>
<div class="t" style="left:263.27px;top:570.18px;font-size:9px;color:#222;">450.00</div>
<div class="c" style="left:295.30px;top:566.20px;width:74.70px;height:15.40px;background:#e3f2d8;"></div>
<div class="t" style="left:300.30px;top:570.69px;font-size:8.4px;color:#2a2a2a;">$</div>
<div class="t" style="left:338.77px;top:570.18px;font-size:9px;color:#222;">650.00</div>
<div class="c" style="left:370.80px;top:566.20px;width:60.20px;height:15.40px;background:#e3f2d8;"></div>
<div class="t" style="left:375.80px;top:570.69px;font-size:8.4px;color:#2a2a2a;">$</div>
<div class="t" style="left:399.77px;top:570.18px;font-size:9px;color:#222;">850.00</div>
<div class="c" style="left:431.80px;top:566.20px;width:60.20px;height:15.40px;background:#e3f2d8;"></div>
<div class="t" style="left:436.80px;top:570.69px;font-size:8.4px;color:#2a2a2a;">$</div>
<div class="t" style="left:460.77px;top:570.18px;font-size:9px;color:#222;">210.00</div>
<div class="c" style="left:492.80px;top:566.20px;width:61.20px;height:15.40px;background:#e3f2d8;"></div>
<div class="t" style="left:497.80px;top:570.69px;font-size:8.4px;color:#2a2a2a;">$</div>
<div class="t" style="left:522.77px;top:570.18px;font-size:9px;color:#222;">320.00</div>
<div class="c" style="left:554.80px;top:566.20px;width:60.20px;height:15.40px;background:#e3f2d8;"></div>
<div class="t" style="left:559.80px;top:570.69px;font-size:8.4px;color:#2a2a2a;">$</div>
<div class="t" style="left:583.77px;top:570.18px;font-size:9px;color:#222;">560.00</div>
<div class="c" style="left:615.80px;top:566.20px;width:60.70px;height:15.40px;background:#e3f2d8;"></div>
<div class="t" style="left:620.80px;top:570.69px;font-size:8.4px;color:#2a2a2a;">$</div>
<div class="t" style="left:645.27px;top:570.18px;font-size:9px;color:#222;">740.00</div>
<div class="c" style="left:677.30px;top:566.20px;width:63.70px;height:15.40px;background:#e3f2d8;"></div>
<div class="t" style="left:682.30px;top:570.69px;font-size:8.4px;color:#2a2a2a;">$</div>
<div class="t" style="left:709.77px;top:570.18px;font-size:9px;color:#222;">150.00</div>
<div class="c" style="left:741.80px;top:566.20px;width:66.20px;height:15.40px;background:#e3f2d8;"></div>
<div class="t" style="left:746.80px;top:570.69px;font-size:8.4px;color:#2a2a2a;">$</div>
<div class="t" style="left:776.77px;top:570.18px;font-size:9px;color:#222;">230.00</div>
<div class="c" style="left:808.80px;top:566.20px;width:70.20px;height:15.40px;background:#e3f2d8;"></div>
<div class="t" style="left:813.80px;top:570.69px;font-size:8.4px;color:#2a2a2a;">$</div>
<div class="t" style="left:847.77px;top:570.18px;font-size:9px;color:#222;">150.00</div>
<div class="c" style="left:879.80px;top:566.20px;width:74.70px;height:15.40px;background:#e3f2d8;"></div>
<div class="t" style="left:884.80px;top:570.69px;font-size:8.4px;color:#2a2a2a;">$</div>
<div class="t" style="left:923.27px;top:570.18px;font-size:9px;color:#222;">560.00</div>
<div class="c" style="left:955.30px;top:566.20px;width:72.20px;height:15.40px;background:#e3f2d8;"></div>
<div class="t" style="left:960.30px;top:570.69px;font-size:8.4px;color:#2a2a2a;">$</div>
<div class="t" style="left:996.27px;top:570.18px;font-size:9px;color:#222;">870.00</div>
<div class="c" style="left:1028.30px;top:566.20px;width:67.70px;height:15.40px;background:linear-gradient(90deg,#d9efc8,#c6e7ad);"></div>
<div class="t" style="left:1033.30px;top:570.69px;font-size:8.4px;color:#2a2a2a;">$</div>
<div class="t" style="left:1057.27px;top:570.18px;font-size:9px;color:#222;">5,740.00</div>
<div class="c" style="left:56.90px;top:582.80px;width:168.30px;height:15.40px;background:#7acd3c;"></div>
<div class="t" style="left:58.60px;top:586.61px;font-size:9.2px;color:#fff;font-weight:bold;letter-spacing:-0.085px;">Gross margin</div>
<div class="c" style="left:226.30px;top:582.80px;width:68.20px;height:15.40px;background:#e3f2d8;"></div>
<div class="t" style="left:231.30px;top:587.29px;font-size:8.4px;color:#2a2a2a;">$</div>
<div class="t" style="left:255.77px;top:586.78px;font-size:9px;color:#222;">4,410.00</div>
<div class="c" style="left:295.30px;top:582.80px;width:74.70px;height:15.40px;background:#e3f2d8;"></div>
<div class="t" style="left:300.30px;top:587.29px;font-size:8.4px;color:#2a2a2a;">$</div>
<div class="t" style="left:331.27px;top:586.78px;font-size:9px;color:#222;">6,633.00</div>
<div class="c" style="left:370.80px;top:582.80px;width:60.20px;height:15.40px;background:#e3f2d8;"></div>
<div class="t" style="left:375.80px;top:587.29px;font-size:8.4px;color:#2a2a2a;">$</div>
<div class="t" style="left:392.27px;top:586.78px;font-size:9px;color:#222;">3,376.00</div>
<div class="c" style="left:431.80px;top:582.80px;width:60.20px;height:15.40px;background:#e3f2d8;"></div>
<div class="t" style="left:436.80px;top:587.29px;font-size:8.4px;color:#2a2a2a;">$</div>
<div class="t" style="left:460.77px;top:586.78px;font-size:9px;color:#222;">808.00</div>
<div class="c" style="left:492.80px;top:582.80px;width:61.20px;height:15.40px;background:#e3f2d8;"></div>
<div class="t" style="left:497.80px;top:587.29px;font-size:8.4px;color:#2a2a2a;">$</div>
<div class="t" style="left:515.27px;top:586.78px;font-size:9px;color:#222;">2,748.00</div>
<div class="c" style="left:554.80px;top:582.80px;width:60.20px;height:15.40px;background:#e3f2d8;"></div>
<div class="t" style="left:559.80px;top:587.29px;font-size:8.4px;color:#2a2a2a;">$</div>
<div class="t" style="left:583.77px;top:586.78px;font-size:9px;color:#222;">256.00</div>
<div class="c" style="left:615.80px;top:582.80px;width:60.70px;height:15.40px;background:#e3f2d8;"></div>
<div class="t" style="left:620.80px;top:587.29px;font-size:8.4px;color:#2a2a2a;">$</div>
<div class="t" style="left:637.77px;top:586.78px;font-size:9px;color:#222;">1,734.00</div>
<div class="c" style="left:677.30px;top:582.80px;width:63.70px;height:15.40px;background:#e3f2d8;"></div>
<div class="t" style="left:682.30px;top:587.29px;font-size:8.4px;color:#2a2a2a;">$</div>
<div class="t" style="left:702.27px;top:586.78px;font-size:9px;color:#222;">2,432.00</div>
<div class="c" style="left:741.80px;top:582.80px;width:66.20px;height:15.40px;background:#e3f2d8;"></div>
<div class="t" style="left:746.80px;top:587.29px;font-size:8.4px;color:#2a2a2a;">$</div>
<div class="t" style="left:769.27px;top:586.78px;font-size:9px;color:#222;">1,258.00</div>
<div class="c" style="left:808.80px;top:582.80px;width:70.20px;height:15.40px;background:#e3f2d8;"></div>
<div class="t" style="left:813.80px;top:587.29px;font-size:8.4px;color:#2a2a2a;">$</div>
<div class="t" style="left:840.27px;top:586.78px;font-size:9px;color:#222;">8,633.00</div>
<div class="c" style="left:879.80px;top:582.80px;width:74.70px;height:15.40px;background:#e3f2d8;"></div>
<div class="t" style="left:884.80px;top:587.29px;font-size:8.4px;color:#2a2a2a;">$</div>
<div class="t" style="left:915.77px;top:586.78px;font-size:9px;color:#222;">4,472.00</div>
<div class="c" style="left:955.30px;top:582.80px;width:72.20px;height:15.40px;background:#e3f2d8;"></div>
<div class="t" style="left:960.30px;top:587.29px;font-size:8.4px;color:#2a2a2a;">$</div>
<div class="t" style="left:988.77px;top:586.78px;font-size:9px;color:#222;">1,934.00</div>
<div class="c" style="left:1028.30px;top:582.80px;width:67.70px;height:15.40px;background:linear-gradient(90deg,#d9efc8,#c6e7ad);"></div>
<div class="t" style="left:1033.30px;top:587.29px;font-size:8.4px;color:#2a2a2a;">$</div>
<div class="t" style="left:1052.26px;top:586.78px;font-size:9px;color:#222;">38,694.00</div>
<div class="c" style="left:56.90px;top:599.40px;width:168.30px;height:15.40px;background:#7acd3c;"></div>
<div class="t" style="left:58.60px;top:603.21px;font-size:9.2px;color:#fff;font-weight:bold;letter-spacing:-0.151px;">Cost of sales</div>
<div class="c" style="left:226.30px;top:599.40px;width:68.20px;height:15.40px;background:#e3f2d8;"></div>
<div class="t" style="left:231.30px;top:605.49px;font-size:8.4px;color:#2a2a2a;">$</div>
<div class="t" style="left:255.77px;top:604.98px;font-size:9px;color:#222;">5,025.00</div>
<div class="c" style="left:295.30px;top:599.40px;width:74.70px;height:15.40px;background:#e3f2d8;"></div>
<div class="t" style="left:300.30px;top:605.49px;font-size:8.4px;color:#2a2a2a;">$</div>
<div class="t" style="left:331.27px;top:604.98px;font-size:9px;color:#222;">7,228.00</div>
<div class="c" style="left:370.80px;top:599.40px;width:60.20px;height:15.40px;background:#e3f2d8;"></div>
<div class="t" style="left:375.80px;top:605.49px;font-size:8.4px;color:#2a2a2a;">$</div>
<div class="t" style="left:392.27px;top:604.98px;font-size:9px;color:#222;">3,981.00</div>
<div class="c" style="left:431.80px;top:599.40px;width:60.20px;height:15.40px;background:#e3f2d8;"></div>
<div class="t" style="left:436.80px;top:605.49px;font-size:8.4px;color:#2a2a2a;">$</div>
<div class="t" style="left:453.27px;top:604.98px;font-size:9px;color:#222;">1,033.00</div>
<div class="c" style="left:492.80px;top:599.40px;width:61.20px;height:15.40px;background:#e3f2d8;"></div>
<div class="t" style="left:497.80px;top:605.49px;font-size:8.4px;color:#2a2a2a;">$</div>
<div class="t" style="left:515.27px;top:604.98px;font-size:9px;color:#222;">3,203.00</div>
<div class="c" style="left:554.80px;top:599.40px;width:60.20px;height:15.40px;background:#e3f2d8;"></div>
<div class="t" style="left:559.80px;top:605.49px;font-size:8.4px;color:#2a2a2a;">$</div>
<div class="t" style="left:583.77px;top:604.98px;font-size:9px;color:#222;">856.00</div>
<div class="c" style="left:615.80px;top:599.40px;width:60.70px;height:15.40px;background:#e3f2d8;"></div>
<div class="t" style="left:620.80px;top:605.49px;font-size:8.4px;color:#2a2a2a;">$</div>
<div class="t" style="left:637.77px;top:604.98px;font-size:9px;color:#222;">2,161.50</div>
<div class="c" style="left:677.30px;top:599.40px;width:63.70px;height:15.40px;background:#e3f2d8;"></div>
<div class="t" style="left:682.30px;top:605.49px;font-size:8.4px;color:#2a2a2a;">$</div>
<div class="t" style="left:702.27px;top:604.98px;font-size:9px;color:#222;">2,563.00</div>
<div class="c" style="left:741.80px;top:599.40px;width:66.20px;height:15.40px;background:#e3f2d8;"></div>
<div class="t" style="left:746.80px;top:605.49px;font-size:8.4px;color:#2a2a2a;">$</div>
<div class="t" style="left:769.27px;top:604.98px;font-size:9px;color:#222;">1,863.00</div>
<div class="c" style="left:808.80px;top:599.40px;width:70.20px;height:15.40px;background:#e3f2d8;"></div>
<div class="t" style="left:813.80px;top:605.49px;font-size:8.4px;color:#2a2a2a;">$</div>
<div class="t" style="left:840.27px;top:604.98px;font-size:9px;color:#222;">9,088.00</div>
<div class="c" style="left:879.80px;top:599.40px;width:74.70px;height:15.40px;background:#e3f2d8;"></div>
<div class="t" style="left:884.80px;top:605.49px;font-size:8.4px;color:#2a2a2a;">$</div>
<div class="t" style="left:915.77px;top:604.98px;font-size:9px;color:#222;">4,977.00</div>
<div class="c" style="left:955.30px;top:599.40px;width:72.20px;height:15.40px;background:#e3f2d8;"></div>
<div class="t" style="left:960.30px;top:605.49px;font-size:8.4px;color:#2a2a2a;">$</div>
<div class="t" style="left:988.77px;top:604.98px;font-size:9px;color:#222;">2,794.00</div>
<div class="c" style="left:1028.30px;top:599.40px;width:67.70px;height:15.40px;background:linear-gradient(90deg,#d9efc8,#c6e7ad);"></div>
<div class="t" style="left:1033.30px;top:605.49px;font-size:8.4px;color:#2a2a2a;">$</div>
<div class="t" style="left:1052.26px;top:604.98px;font-size:9px;color:#222;">44,772.50</div>
<div class="c" style="left:56.90px;top:616.00px;width:168.30px;height:15.40px;background:#7acd3c;"></div>
<div class="t" style="left:58.60px;top:619.81px;font-size:9.2px;color:#fff;font-weight:bold;letter-spacing:-0.099px;">Business expense</div>
<div class="c" style="left:226.30px;top:616.00px;width:68.20px;height:15.40px;background:#e3f2d8;"></div>
<div class="t" style="left:231.30px;top:622.24px;font-size:8.4px;color:#2a2a2a;">$</div>
<div class="t" style="left:255.77px;top:621.73px;font-size:9px;color:#222;">1,230.00</div>
<div class="c" style="left:295.30px;top:616.00px;width:74.70px;height:15.40px;background:#e3f2d8;"></div>
<div class="t" style="left:300.30px;top:622.24px;font-size:8.4px;color:#2a2a2a;">$</div>
<div class="t" style="left:331.27px;top:621.73px;font-size:9px;color:#222;">1,190.00</div>
<div class="c" style="left:370.80px;top:616.00px;width:60.20px;height:15.40px;background:#e3f2d8;"></div>
<div class="t" style="left:375.80px;top:622.24px;font-size:8.4px;color:#2a2a2a;">$</div>
<div class="t" style="left:392.27px;top:621.73px;font-size:9px;color:#222;">1,210.00</div>
<div class="c" style="left:431.80px;top:616.00px;width:60.20px;height:15.40px;background:#e3f2d8;"></div>
<div class="t" style="left:436.80px;top:622.24px;font-size:8.4px;color:#2a2a2a;">$</div>
<div class="t" style="left:460.77px;top:621.73px;font-size:9px;color:#222;">450.00</div>
<div class="c" style="left:492.80px;top:616.00px;width:61.20px;height:15.40px;background:#e3f2d8;"></div>
<div class="t" style="left:497.80px;top:622.24px;font-size:8.4px;color:#2a2a2a;">$</div>
<div class="t" style="left:522.77px;top:621.73px;font-size:9px;color:#222;">910.00</div>
<div class="c" style="left:554.80px;top:616.00px;width:60.20px;height:15.40px;background:#e3f2d8;"></div>
<div class="t" style="left:559.80px;top:622.24px;font-size:8.4px;color:#2a2a2a;">$</div>
<div class="t" style="left:576.27px;top:621.73px;font-size:9px;color:#222;">1,200.00</div>
<div class="c" style="left:615.80px;top:616.00px;width:60.70px;height:15.40px;background:#e3f2d8;"></div>
<div class="t" style="left:620.80px;top:622.24px;font-size:8.4px;color:#2a2a2a;">$</div>
<div class="t" style="left:645.27px;top:621.73px;font-size:9px;color:#222;">855.00</div>
<div class="c" style="left:677.30px;top:616.00px;width:63.70px;height:15.40px;background:#e3f2d8;"></div>
<div class="t" style="left:682.30px;top:622.24px;font-size:8.4px;color:#2a2a2a;">$</div>
<div class="t" style="left:709.77px;top:621.73px;font-size:9px;color:#222;">262.00</div>
<div class="c" style="left:741.80px;top:616.00px;width:66.20px;height:15.40px;background:#e3f2d8;"></div>
<div class="t" style="left:746.80px;top:622.24px;font-size:8.4px;color:#2a2a2a;">$</div>
<div class="t" style="left:769.27px;top:621.73px;font-size:9px;color:#222;">1,210.00</div>
<div class="c" style="left:808.80px;top:616.00px;width:70.20px;height:15.40px;background:#e3f2d8;"></div>
<div class="t" style="left:813.80px;top:622.24px;font-size:8.4px;color:#2a2a2a;">$</div>
<div class="t" style="left:847.77px;top:621.73px;font-size:9px;color:#222;">910.00</div>
<div class="c" style="left:879.80px;top:616.00px;width:74.70px;height:15.40px;background:#e3f2d8;"></div>
<div class="t" style="left:884.80px;top:622.24px;font-size:8.4px;color:#2a2a2a;">$</div>
<div class="t" style="left:915.77px;top:621.73px;font-size:9px;color:#222;">1,010.00</div>
<div class="c" style="left:955.30px;top:616.00px;width:72.20px;height:15.40px;background:#e3f2d8;"></div>
<div class="t" style="left:960.30px;top:622.24px;font-size:8.4px;color:#2a2a2a;">$</div>
<div class="t" style="left:988.77px;top:621.73px;font-size:9px;color:#222;">1,720.00</div>
<div class="c" style="left:1028.30px;top:616.00px;width:67.70px;height:15.40px;background:linear-gradient(90deg,#d9efc8,#c6e7ad);"></div>
<div class="t" style="left:1033.30px;top:620.79px;font-size:8.4px;color:#2a2a2a;">$</div>
<div class="t" style="left:1052.26px;top:620.28px;font-size:9px;color:#222;">12,157.00</div>
<div class="c" style="left:56.90px;top:632.60px;width:168.30px;height:15.50px;background:#7acd3c;"></div>
<div class="t" style="left:58.60px;top:636.51px;font-size:9.2px;color:#fff;font-weight:bold;letter-spacing:0.130px;">Management expenses</div>
<div class="c" style="left:226.30px;top:632.60px;width:68.20px;height:15.50px;background:#c6efce;"></div>
<div class="t" style="left:250.29px;top:635.87px;font-size:10.2px;color:#006100;font-weight:bold;">28%</div>
<div class="c" style="left:295.30px;top:632.60px;width:74.70px;height:15.50px;background:#ffc7ce;"></div>
<div class="t" style="left:322.54px;top:635.87px;font-size:10.2px;color:#9c0006;font-weight:bold;">18%</div>
<div class="c" style="left:370.80px;top:632.60px;width:60.20px;height:15.50px;background:#c6efce;"></div>
<div class="t" style="left:390.79px;top:635.87px;font-size:10.2px;color:#006100;font-weight:bold;">36%</div>
<div class="c" style="left:431.80px;top:632.60px;width:60.20px;height:15.50px;background:#c6efce;"></div>
<div class="t" style="left:451.79px;top:635.87px;font-size:10.2px;color:#006100;font-weight:bold;">56%</div>
<div class="c" style="left:492.80px;top:632.60px;width:61.20px;height:15.50px;background:#c6efce;"></div>
<div class="t" style="left:513.29px;top:635.87px;font-size:10.2px;color:#006100;font-weight:bold;">33%</div>
<div class="c" style="left:554.80px;top:632.60px;width:60.20px;height:15.50px;background:#ffc7ce;"></div>
<div class="t" style="left:577.63px;top:635.87px;font-size:10.2px;color:#9c0006;font-weight:bold;">5%</div>
<div class="c" style="left:615.80px;top:632.60px;width:60.70px;height:15.50px;background:#c6efce;"></div>
<div class="t" style="left:636.04px;top:635.87px;font-size:10.2px;color:#006100;font-weight:bold;">49%</div>
<div class="c" style="left:677.30px;top:632.60px;width:63.70px;height:15.50px;background:#ffc7ce;"></div>
<div class="t" style="left:699.32px;top:635.87px;font-size:10.2px;color:#9c0006;font-weight:bold;">11%</div>
<div class="c" style="left:741.80px;top:632.60px;width:66.20px;height:15.50px;background:#c6efce;"></div>
<div class="t" style="left:764.79px;top:635.87px;font-size:10.2px;color:#006100;font-weight:bold;">96%</div>
<div class="c" style="left:808.80px;top:632.60px;width:70.20px;height:15.50px;background:#ffc7ce;"></div>
<div class="t" style="left:834.07px;top:635.87px;font-size:10.2px;color:#9c0006;font-weight:bold;">11%</div>
<div class="c" style="left:879.80px;top:632.60px;width:74.70px;height:15.50px;background:#ffc7ce;"></div>
<div class="t" style="left:907.04px;top:635.87px;font-size:10.2px;color:#9c0006;font-weight:bold;">23%</div>
<div class="c" style="left:955.30px;top:632.60px;width:72.20px;height:15.50px;background:#c6efce;"></div>
<div class="t" style="left:981.29px;top:635.87px;font-size:10.2px;color:#006100;font-weight:bold;">89%</div>
<div class="c" style="left:1028.30px;top:632.60px;width:67.70px;height:15.50px;background:#c6efce;"></div>
<div class="t" style="left:1052.04px;top:635.87px;font-size:10.2px;color:#006100;font-weight:bold;">58%</div>
<div class="c" style="left:56.90px;top:649.30px;width:168.30px;height:15.40px;background:#7acd3c;"></div>
<div class="t" style="left:58.60px;top:653.11px;font-size:9.2px;color:#fff;font-weight:bold;letter-spacing:0.133px;">Other income</div>
<div class="c" style="left:226.30px;top:649.30px;width:68.20px;height:15.40px;background:#e3f2d8;"></div>
<div class="t" style="left:231.30px;top:655.19px;font-size:8.4px;color:#2a2a2a;">$</div>
<div class="t" style="left:255.77px;top:654.68px;font-size:9px;color:#222;">3,261.00</div>
<div class="c" style="left:295.30px;top:649.30px;width:74.70px;height:15.40px;background:#e3f2d8;"></div>
<div class="t" style="left:300.30px;top:655.19px;font-size:8.4px;color:#2a2a2a;">$</div>
<div class="t" style="left:331.27px;top:654.68px;font-size:9px;color:#222;">4,574.80</div>
<div class="c" style="left:370.80px;top:649.30px;width:60.20px;height:15.40px;background:#e3f2d8;"></div>
<div class="t" style="left:375.80px;top:655.19px;font-size:8.4px;color:#2a2a2a;">$</div>
<div class="t" style="left:392.27px;top:654.68px;font-size:9px;color:#222;">2,630.60</div>
<div class="c" style="left:431.80px;top:649.30px;width:60.20px;height:15.40px;background:#e3f2d8;"></div>
<div class="t" style="left:436.80px;top:655.19px;font-size:8.4px;color:#2a2a2a;">$</div>
<div class="t" style="left:460.77px;top:654.68px;font-size:9px;color:#222;">709.80</div>
<div class="c" style="left:492.80px;top:649.30px;width:61.20px;height:15.40px;background:#e3f2d8;"></div>
<div class="t" style="left:497.80px;top:655.19px;font-size:8.4px;color:#2a2a2a;">$</div>
<div class="t" style="left:515.27px;top:654.68px;font-size:9px;color:#222;">2,103.80</div>
<div class="c" style="left:554.80px;top:649.30px;width:60.20px;height:15.40px;background:#e3f2d8;"></div>
<div class="t" style="left:559.80px;top:655.19px;font-size:8.4px;color:#2a2a2a;">$</div>
<div class="t" style="left:583.77px;top:654.68px;font-size:9px;color:#222;">753.60</div>
<div class="c" style="left:615.80px;top:649.30px;width:60.70px;height:15.40px;background:#e3f2d8;"></div>
<div class="t" style="left:620.80px;top:655.19px;font-size:8.4px;color:#2a2a2a;">$</div>
<div class="t" style="left:637.77px;top:654.68px;font-size:9px;color:#222;">1,467.90</div>
<div class="c" style="left:677.30px;top:649.30px;width:63.70px;height:15.40px;background:#e3f2d8;"></div>
<div class="t" style="left:682.30px;top:655.19px;font-size:8.4px;color:#2a2a2a;">$</div>
<div class="t" style="left:702.27px;top:654.68px;font-size:9px;color:#222;">1,590.20</div>
<div class="c" style="left:741.80px;top:649.30px;width:66.20px;height:15.40px;background:#e3f2d8;"></div>
<div class="t" style="left:746.80px;top:655.19px;font-size:8.4px;color:#2a2a2a;">$</div>
<div class="t" style="left:769.27px;top:654.68px;font-size:9px;color:#222;">1,359.80</div>
<div class="c" style="left:808.80px;top:649.30px;width:70.20px;height:15.40px;background:#e3f2d8;"></div>
<div class="t" style="left:813.80px;top:655.19px;font-size:8.4px;color:#2a2a2a;">$</div>
<div class="t" style="left:840.27px;top:654.68px;font-size:9px;color:#222;">5,634.80</div>
<div class="c" style="left:879.80px;top:649.30px;width:74.70px;height:15.40px;background:#e3f2d8;"></div>
<div class="t" style="left:884.80px;top:655.19px;font-size:8.4px;color:#2a2a2a;">$</div>
<div class="t" style="left:915.77px;top:654.68px;font-size:9px;color:#222;">3,188.20</div>
<div class="c" style="left:955.30px;top:649.30px;width:72.20px;height:15.40px;background:#e3f2d8;"></div>
<div class="t" style="left:960.30px;top:655.19px;font-size:8.4px;color:#2a2a2a;">$</div>
<div class="t" style="left:988.77px;top:654.68px;font-size:9px;color:#222;">2,020.40</div>
<div class="c" style="left:1028.30px;top:649.30px;width:67.70px;height:15.40px;background:linear-gradient(90deg,#d9efc8,#c6e7ad);"></div>
<div class="t" style="left:1033.30px;top:653.79px;font-size:8.4px;color:#2a2a2a;">$</div>
<div class="t" style="left:1052.26px;top:653.28px;font-size:9px;color:#222;">29,294.90</div>
<div class="abs" style="left:34px;top:123px;width:1121.6px;height:15px;background:#e2e2e2;border-bottom:1px solid #d6d6d6"></div>
<div class="abs" style="left:34px;top:138px;width:22.9px;height:579px;background:#e2e2e2;border-right:1px solid #d3d3d3"></div>
<div class="abs" style="left:56.9px;top:123px;width:238.1px;height:15px;background:#c1c1c1;border-bottom:1px solid #ababab"></div>
<div class="abs" style="left:34px;top:262px;width:22.9px;height:23px;background:#c1c1c1;border-right:1px solid #ababab"></div>
<div class="abs" style="left:56px;top:123px;width:1px;height:15px;background:#cacaca"></div>
<svg style="left:44.2px;top:126.4px" width="11" height="10" viewBox="0 0 11 10"><path d="M10.6 0.2V9.8H0.4Z" fill="#c6c6c6"/></svg>
<div class="abs" style="left:157.5px;top:123px;width:1px;height:15px;background:#ababab"></div>
<div class="t" style="left:103.83px;top:127.10px;font-size:10.4px;color:#4a4a4a;">A</div>
<div class="abs" style="left:225px;top:123px;width:1px;height:15px;background:#ababab"></div>
<div class="t" style="left:188.38px;top:127.10px;font-size:10.4px;color:#4a4a4a;">B</div>
<div class="abs" style="left:294px;top:123px;width:1px;height:15px;background:#ababab"></div>
<div class="t" style="left:256.34px;top:127.10px;font-size:10.4px;color:#4a4a4a;">C</div>
<div class="abs" style="left:369.5px;top:123px;width:1px;height:15px;background:#d3d3d3"></div>
<div class="t" style="left:328.59px;top:127.10px;font-size:10.4px;color:#4a4a4a;">D</div>
<div class="abs" style="left:430.5px;top:123px;width:1px;height:15px;background:#d3d3d3"></div>
<div class="t" style="left:397.13px;top:127.10px;font-size:10.4px;color:#4a4a4a;">E</div>
<div class="abs" style="left:491.5px;top:123px;width:1px;height:15px;background:#d3d3d3"></div>
<div class="t" style="left:458.42px;top:127.10px;font-size:10.4px;color:#4a4a4a;">F</div>
<div class="abs" style="left:553.5px;top:123px;width:1px;height:15px;background:#d3d3d3"></div>
<div class="t" style="left:519.06px;top:127.10px;font-size:10.4px;color:#4a4a4a;">G</div>
<div class="abs" style="left:614.5px;top:123px;width:1px;height:15px;background:#d3d3d3"></div>
<div class="t" style="left:580.84px;top:127.10px;font-size:10.4px;color:#4a4a4a;">H</div>
<div class="abs" style="left:676px;top:123px;width:1px;height:15px;background:#d3d3d3"></div>
<div class="t" style="left:644.41px;top:127.10px;font-size:10.4px;color:#4a4a4a;">I</div>
<div class="abs" style="left:740.5px;top:123px;width:1px;height:15px;background:#d3d3d3"></div>
<div class="t" style="left:706.25px;top:127.10px;font-size:10.4px;color:#4a4a4a;">J</div>
<div class="abs" style="left:807.5px;top:123px;width:1px;height:15px;background:#d3d3d3"></div>
<div class="t" style="left:771.13px;top:127.10px;font-size:10.4px;color:#4a4a4a;">K</div>
<div class="abs" style="left:878.5px;top:123px;width:1px;height:15px;background:#d3d3d3"></div>
<div class="t" style="left:840.71px;top:127.10px;font-size:10.4px;color:#4a4a4a;">L</div>
<div class="abs" style="left:954px;top:123px;width:1px;height:15px;background:#d3d3d3"></div>
<div class="t" style="left:912.52px;top:127.10px;font-size:10.4px;color:#4a4a4a;">M</div>
<div class="abs" style="left:1027px;top:123px;width:1px;height:15px;background:#d3d3d3"></div>
<div class="t" style="left:987.34px;top:127.10px;font-size:10.4px;color:#4a4a4a;">N</div>
<div class="abs" style="left:1095.5px;top:123px;width:1px;height:15px;background:#d3d3d3"></div>
<div class="t" style="left:1057.81px;top:127.10px;font-size:10.4px;color:#4a4a4a;">O</div>
<div class="abs" style="left:1153.2px;top:123px;width:1px;height:15px;background:#d3d3d3"></div>
<div class="t" style="left:1121.48px;top:127.10px;font-size:10.4px;color:#4a4a4a;">P</div>
<div class="abs" style="left:34px;top:160px;width:22.4px;height:1px;background:#dddddd"></div>
<div class="t" style="left:42.00px;top:148.97px;font-size:11.5px;color:#444;">1</div>
<div class="abs" style="left:34px;top:186px;width:22.4px;height:1px;background:#dddddd"></div>
<div class="t" style="left:42.00px;top:174.97px;font-size:11.5px;color:#444;">2</div>
<div class="abs" style="left:34px;top:210px;width:22.4px;height:1px;background:#dddddd"></div>
<div class="t" style="left:42.00px;top:198.97px;font-size:11.5px;color:#444;">3</div>
<div class="abs" style="left:34px;top:261px;width:22.4px;height:1px;background:#ababab"></div>
<div class="t" style="left:42.00px;top:250.37px;font-size:11.5px;color:#444;">4</div>
<div class="abs" style="left:34px;top:284px;width:22.4px;height:1px;background:#ababab"></div>
<div class="t" style="left:42.00px;top:272.97px;font-size:11.5px;color:#444;">5</div>
<div class="abs" style="left:34px;top:307.5px;width:22.4px;height:1px;background:#dddddd"></div>
<div class="t" style="left:42.00px;top:296.47px;font-size:11.5px;color:#444;">6</div>
<div class="abs" style="left:34px;top:327.6px;width:22.4px;height:1px;background:#dddddd"></div>
<div class="t" style="left:42.00px;top:315.17px;font-size:11.5px;color:#444;">7</div>
<div class="abs" style="left:34px;top:343px;width:22.4px;height:1px;background:#dddddd"></div>
<div class="t" style="left:42.00px;top:330.77px;font-size:11.5px;color:#444;">8</div>
<div class="abs" style="left:34px;top:369.5px;width:22.4px;height:1px;background:#dddddd"></div>
<div class="t" style="left:42.00px;top:356.17px;font-size:11.5px;color:#444;">9</div>
<div class="abs" style="left:34px;top:397px;width:22.4px;height:1px;background:#dddddd"></div>
<div class="t" style="left:38.80px;top:385.47px;font-size:11.5px;color:#444;">10</div>
<div class="abs" style="left:34px;top:414px;width:22.4px;height:1px;background:#dddddd"></div>
<div class="t" style="left:39.23px;top:402.97px;font-size:11.5px;color:#444;">11</div>
<div class="abs" style="left:34px;top:430.5px;width:22.4px;height:1px;background:#dddddd"></div>
<div class="t" style="left:38.80px;top:419.47px;font-size:11.5px;color:#444;">12</div>
<div class="abs" style="left:34px;top:447.5px;width:22.4px;height:1px;background:#dddddd"></div>
<div class="t" style="left:38.80px;top:436.47px;font-size:11.5px;color:#444;">13</div>
<div class="abs" style="left:34px;top:464px;width:22.4px;height:1px;background:#dddddd"></div>
<div class="t" style="left:38.80px;top:452.97px;font-size:11.5px;color:#444;">14</div>
<div class="abs" style="left:34px;top:481px;width:22.4px;height:1px;background:#dddddd"></div>
<div class="t" style="left:38.80px;top:469.97px;font-size:11.5px;color:#444;">15</div>
<div class="abs" style="left:34px;top:497.6px;width:22.4px;height:1px;background:#dddddd"></div>
<div class="t" style="left:38.80px;top:486.57px;font-size:11.5px;color:#444;">16</div>
<div class="abs" style="left:34px;top:514.6px;width:22.4px;height:1px;background:#dddddd"></div>
<div class="t" style="left:38.80px;top:503.57px;font-size:11.5px;color:#444;">17</div>
<div class="abs" style="left:34px;top:531.4px;width:22.4px;height:1px;background:#dddddd"></div>
<div class="t" style="left:38.80px;top:520.37px;font-size:11.5px;color:#444;">18</div>
<div class="abs" style="left:34px;top:548px;width:22.4px;height:1px;background:#dddddd"></div>
<div class="t" style="left:38.80px;top:536.97px;font-size:11.5px;color:#444;">19</div>
<div class="abs" style="left:34px;top:564.6px;width:22.4px;height:1px;background:#dddddd"></div>
<div class="t" style="left:38.80px;top:553.57px;font-size:11.5px;color:#444;">20</div>
<div class="abs" style="left:34px;top:581.2px;width:22.4px;height:1px;background:#dddddd"></div>
<div class="t" style="left:38.80px;top:570.17px;font-size:11.5px;color:#444;">21</div>
<div class="abs" style="left:34px;top:597.8px;width:22.4px;height:1px;background:#dddddd"></div>
<div class="t" style="left:38.80px;top:586.77px;font-size:11.5px;color:#444;">22</div>
<div class="abs" style="left:34px;top:614.4px;width:22.4px;height:1px;background:#dddddd"></div>
<div class="t" style="left:38.80px;top:603.37px;font-size:11.5px;color:#444;">23</div>
<div class="abs" style="left:34px;top:631px;width:22.4px;height:1px;background:#dddddd"></div>
<div class="t" style="left:38.80px;top:619.97px;font-size:11.5px;color:#444;">24</div>
<div class="abs" style="left:34px;top:647.7px;width:22.4px;height:1px;background:#dddddd"></div>
<div class="t" style="left:38.80px;top:636.67px;font-size:11.5px;color:#444;">25</div>
<div class="abs" style="left:34px;top:664.3px;width:22.4px;height:1px;background:#dddddd"></div>
<div class="t" style="left:38.80px;top:653.27px;font-size:11.5px;color:#444;">26</div>
<div class="abs" style="left:34px;top:680.8px;width:22.4px;height:1px;background:#dddddd"></div>
<div class="t" style="left:38.80px;top:669.77px;font-size:11.5px;color:#444;">27</div>
<div class="abs" style="left:34px;top:696.2px;width:22.4px;height:1px;background:#dddddd"></div>
<div class="t" style="left:38.80px;top:685.17px;font-size:11.5px;color:#444;">28</div>
<div class="abs" style="left:34px;top:711.6px;width:22.4px;height:1px;background:#dddddd"></div>
<div class="t" style="left:38.80px;top:700.57px;font-size:11.5px;color:#444;">29</div>
<div class="abs" style="left:1155.6px;top:123px;width:11.4px;height:594px;background:#e1e1e1"></div>
<div class="abs" style="left:1156.6px;top:125px;width:9.6px;height:9.4px;background:#f3f3f3;border-radius:1px"></div>
<svg style="left:1158.6px;top:128.2px" width="5" height="2.8" viewBox="0 0 5 2.8"><path d="M0 2.8L2.5 0L5 2.8Z" fill="#b9b9b9"/></svg>
<div class="abs" style="left:1156.2px;top:136.6px;width:10.4px;height:290.4px;background:#efefef;border-left:1px solid #d6d6d6;border-bottom:1px solid #d0d0d0"></div>
<div class="abs" style="left:1159px;top:277.4px;width:5px;height:1px;background:#d2d2d2"></div>
<div class="abs" style="left:1159px;top:279.5px;width:5px;height:1px;background:#d2d2d2"></div>
<div class="abs" style="left:1159px;top:281.59999999999997px;width:5px;height:1px;background:#d2d2d2"></div>
<div class="abs" style="left:1159px;top:283.7px;width:5px;height:1px;background:#d2d2d2"></div>
<div class="abs" style="left:1159px;top:285.79999999999995px;width:5px;height:1px;background:#d2d2d2"></div>
<div class="abs" style="left:1156.6px;top:706.2px;width:9.6px;height:9.4px;background:#f3f3f3;border-radius:1px"></div>
<svg style="left:1158.6px;top:709.6px" width="5" height="2.8" viewBox="0 0 5 2.8"><path d="M0 0L2.5 2.8L5 0Z" fill="#b9b9b9"/></svg>
<div class="abs" style="left:34px;top:716.4px;width:1133px;height:12.8px;background:#e1e1e1"></div>
<div class="abs" style="left:36px;top:718.4px;width:9.4px;height:8.8px;background:#f3f3f3;border:1px solid #d9d9d9;border-radius:1px"></div>
<svg style="left:39px;top:720.2px" width="3.4" height="5.4" viewBox="0 0 3.4 5.4"><path d="M3.4 0L0 2.7L3.4 5.4Z" fill="#adadad"/></svg>
<div class="abs" style="left:47.6px;top:718.4px;width:27px;height:8.8px;background:#f3f3f3;border:1px solid #d9d9d9;border-radius:1px"></div>
<div class="abs" style="left:57.4px;top:720.6px;width:1px;height:4.6px;background:#c6c6c6"></div>
<div class="abs" style="left:59.6px;top:720.6px;width:1px;height:4.6px;background:#c6c6c6"></div>
<div class="abs" style="left:61.8px;top:720.6px;width:1px;height:4.6px;background:#c6c6c6"></div>
<div class="abs" style="left:64.0px;top:720.6px;width:1px;height:4.6px;background:#c6c6c6"></div>
<div class="abs" style="left:1144.6px;top:718.4px;width:9.4px;height:8.8px;background:#f3f3f3;border:1px solid #d9d9d9;border-radius:1px"></div>
<svg style="left:1147.8px;top:720.2px" width="3.4" height="5.4" viewBox="0 0 3.4 5.4"><path d="M0 0L3.4 2.7L0 5.4Z" fill="#adadad"/></svg><svg style="left:230px;top:212px" width="90" height="48" viewBox="230 212 90 48"><rect x="251.5" y="217.6" width="60" height="29" fill="#fff" stroke="#7acd3c" stroke-width="1.1"/><path d="M268.4 247 L266.2 251.8 H288.8 L286.6 247" fill="none" stroke="#7acd3c" stroke-width="1"/><rect x="258.6" y="251.8" width="38.2" height="4" fill="#fff" stroke="#7acd3c" stroke-width="1"/><rect x="259.4" y="235.2" width="6.2" height="9.1" fill="#84d045" stroke="#5aa626" stroke-width=".9"/><rect x="271.9" y="234.4" width="6.2" height="9.9" fill="#84d045" stroke="#5aa626" stroke-width=".9"/><rect x="284.5" y="225.9" width="6.2" height="18.4" fill="#84d045" stroke="#5aa626" stroke-width=".9"/><rect x="297.2" y="228.2" width="6.2" height="16.1" fill="#84d045" stroke="#5aa626" stroke-width=".9"/><path d="M260.4 240.2 L302.4 223.4" stroke="#5aa626" stroke-width="3" fill="none"/><path d="M260.8 240 L302.4 223.4" stroke="#7acd3c" stroke-width="1.6" fill="none"/><path d="M299.4 220 L307.4 222 L302.8 227 Z" fill="#7acd3c" stroke="#5aa626" stroke-width=".9" stroke-linejoin="round"/><circle cx="244.8" cy="244.9" r="9.9" fill="#fff" stroke="#e8177d" stroke-width="1.3"/><text x="244.8" y="249.6" text-anchor="middle" font-family="Liberation Sans" font-weight="bold" font-size="12.6" fill="#e8177d" stroke="#e8177d" stroke-width=".4">$</text></svg>
<svg style="left:445px;top:222px" width="254" height="31" viewBox="445 222 254 31"><rect x="445" y="222.6" width="254" height="30" fill="#fdfdfd"/><rect x="445" y="222.6" width="11.4" height="30" fill="#f3f3f3"/><rect x="688.6" y="222.6" width="10" height="30" fill="#f6f6f6"/><rect x="456" y="222.6" width="51" height="1.2" fill="#a8b4dc"/><rect x="507" y="222.6" width="43" height="1.2" fill="#fdd57a"/><rect x="550" y="222.6" width="38" height="1.2" fill="#f178b2"/><rect x="588" y="222.6" width="44" height="1.2" fill="#8c93a2"/><rect x="458.8" y="230.0" width="1.5" height="1.5" fill="#e8177d"/><rect x="458.8" y="232.9" width="1.5" height="1.5" fill="#b0135f"/><rect x="458.8" y="235.7" width="1.5" height="1.5" fill="#e8a010"/><rect x="458.8" y="238.6" width="1.5" height="1.5" fill="#129bc9"/><rect x="458.8" y="241.4" width="1.5" height="1.5" fill="#6f87c8"/><rect x="458.8" y="244.3" width="1.5" height="1.5" fill="#1aa58c"/><rect x="458.8" y="247.2" width="1.5" height="1.5" fill="#a6dd8b"/><rect x="458.8" y="250.0" width="1.5" height="1.5" fill="#ee8fb0"/><path d="M462 230.8h11.6M462 239.4h12.6M462 248h16" stroke="#666" stroke-width=".8"/><rect x="487.4" y="227.6" width="10.6" height="1.3" fill="#b4e39e"/><path d="M487 240.6 v3.4 a16.5 7.4 0 0 0 33 0 v-3.4Z" fill="#9b1056"/><path d="M487 240.6 v3.4 a16.5 7.4 0 0 0 16.5 7.4 v-3.4Z" fill="#6b8f5a"/><ellipse cx="503.5" cy="240.6" rx="16.5" ry="7.4" fill="#a6dd8b"/><path d="M503.5 240.6 V233.2 A16.5 7.4 0 0 1 503.5 248 Z" fill="#e8177d"/><path d="M503.5 240.6 V248 A16.5 7.4 0 0 1 496 247.2 Z" fill="#129bc9"/><rect x="552.6" y="227.6" width="15.4" height="1.3" fill="#7cbdd3"/><rect x="543.40" y="236.3" width="1.9" height="14" fill="#45b562"/><rect x="547.30" y="239.9" width="1.9" height="10.4" fill="#45b562"/><rect x="551.20" y="242.7" width="1.9" height="7.6" fill="#45b562"/><rect x="555.10" y="244.7" width="1.9" height="5.6" fill="#45b562"/><rect x="559.00" y="239.3" width="1.9" height="11" fill="#45b562"/><rect x="562.90" y="238.3" width="1.9" height="12" fill="#45b562"/><rect x="566.80" y="247.7" width="1.9" height="2.6" fill="#45b562"/><rect x="570.70" y="247.7" width="1.9" height="2.6" fill="#45b562"/><rect x="574.60" y="232.7" width="1.9" height="17.6" fill="#45b562"/><rect x="578.50" y="236.3" width="1.9" height="14" fill="#45b562"/><rect x="582.40" y="241.9" width="1.9" height="8.4" fill="#45b562"/><rect x="586.30" y="234.9" width="1.9" height="15.4" fill="#45b562"/><path d="M531.6 234.2h8M533.6 242.4h6M537.6 250.2h2" stroke="#bbb" stroke-width=".6"/><rect x="614.4" y="227.6" width="41.6" height="1.3" fill="#edc876"/><path d="M594.6 233.4h9M594.6 238h9M594.6 242.6h9M596 247h7.6M601 251.4h2" stroke="#c4c4c4" stroke-width=".6"/><path d="M609 250.4 L614 241.6 L620 237 L625 243.6 L630 249.2 L636 245 L641 249.4 L647 247 L652 246.4 L657 247.6 L663 233.6 L668 241.6 L673 245.6" fill="none" stroke="#ef7fb5" stroke-width=".9"/><path d="M609 250.4 L614 245.6 L620 243.6 L625 246.6 L630 249.6 L636 247.6 L641 249.6 L647 248.6 L652 248.4 L657 248.6 L663 242 L668 246 L673 247.6" fill="none" stroke="#b5e29a" stroke-width=".9"/><path d="M692.4 225.6h2.4M692.4 231.6h2.4M692.4 238.4h2.4" stroke="#c8c8c8" stroke-width=".8"/><path d="M448.6 226v24" stroke="#d4d4d4" stroke-width="1.2" stroke-dasharray="1.2 1.6"/></svg>
<svg style="left:190px;top:345px" width="170" height="110" viewBox="190 345 170 110"><path d="M197.4 391.2 A77.4 38.6 0 0 0 239.40 425.53 v16.6 A77.4 38.6 0 0 1 197.4 407.8 Z" fill="#6e9160"/><path d="M239.40 425.53 A77.4 38.6 0 0 0 274.8 429.8 v16.6 A77.4 38.6 0 0 1 239.40 442.13 Z" fill="#086f8f"/><path d="M274.8 429.8 A77.4 38.6 0 0 0 352.20000000000005 391.2 v16.6 A77.4 38.6 0 0 1 274.8 446.40000000000003 Z" fill="#9a1156"/><path d="M274.8 391.2 L274.8 352.59999999999997 A77.4 38.6 0 0 0 197.4 391.2 A77.4 38.6 0 0 0 239.40 425.53 Z" fill="#a8de8e"/><path d="M274.8 391.2 L239.40 425.53 A77.4 38.6 0 0 0 274.8 429.8 Z" fill="#0f9bc9"/><path d="M274.8 391.2 L274.8 352.59999999999997 A77.4 38.6 0 0 1 352.20000000000005 391.2 A77.4 38.6 0 0 1 274.8 429.8 Z" fill="#e8177d"/></svg>
<div class="t" style="left:199.80px;top:324.60px;font-size:10.4px;color:#7acd3c;letter-spacing:0.196px;-webkit-text-stroke:.4px #7acd3c;">SUMMER</div>
<div class="abs" style="left:67.2px;top:337.60px;width:6.4px;height:6.4px;background:#e8177d"></div>
<div class="t" style="left:78.40px;top:334.83px;font-size:10.6px;color:#1a1a1a;letter-spacing:-0.092px;-webkit-text-stroke:.15px #1a1a1a;">Total income</div>
<div class="abs" style="left:67.2px;top:351.16px;width:6.4px;height:6.4px;background:#b0135f"></div>
<div class="abs" style="left:67.2px;top:364.72px;width:6.4px;height:6.4px;background:#e8a010"></div>
<div class="abs" style="left:67.2px;top:378.28px;width:6.4px;height:6.4px;background:#129bc9"></div>
<div class="t" style="left:78.40px;top:375.51px;font-size:10.6px;color:#1a1a1a;letter-spacing:-0.265px;-webkit-text-stroke:.15px #1a1a1a;">Total expenses</div>
<div class="abs" style="left:67.2px;top:391.84px;width:6.4px;height:6.4px;background:#6f87c8"></div>
<div class="abs" style="left:67.2px;top:405.40px;width:6.4px;height:6.4px;background:#1aa58c"></div>
<div class="abs" style="left:67.2px;top:418.96px;width:6.4px;height:6.4px;background:#a6dd8b"></div>
<div class="t" style="left:78.40px;top:416.19px;font-size:10.6px;color:#1a1a1a;letter-spacing:-0.220px;-webkit-text-stroke:.15px #1a1a1a;">Total Gross margin</div>
<div class="abs" style="left:67.2px;top:432.52px;width:6.4px;height:6.4px;background:#ee8fb0"></div>
<svg style="left:440px;top:345px" width="250" height="100" viewBox="440 345 250 100"><defs><linearGradient id="bg1" x1="0" y1="0" x2="0" y2="1"><stop offset="0" stop-color="#7ccf3e"/><stop offset="1" stop-color="#1aae9e"/></linearGradient><linearGradient id="bg2" x1="0" y1="0" x2="0" y2="1"><stop offset="0" stop-color="#4e9a2a"/><stop offset="1" stop-color="#0f7f78"/></linearGradient></defs><path d="M456.79999999999995 356.60 L463.4 353.20 H681" fill="none" stroke="#dcdcdc" stroke-width=".8"/><path d="M456.79999999999995 364.44 L463.4 361.04 H681" fill="none" stroke="#efefef" stroke-width=".8"/><path d="M456.79999999999995 372.28 L463.4 368.88 H681" fill="none" stroke="#efefef" stroke-width=".8"/><path d="M456.79999999999995 380.12 L463.4 376.72 H681" fill="none" stroke="#efefef" stroke-width=".8"/><path d="M456.79999999999995 387.96 L463.4 384.56 H681" fill="none" stroke="#efefef" stroke-width=".8"/><path d="M456.79999999999995 395.80 L463.4 392.40 H681" fill="none" stroke="#dcdcdc" stroke-width=".8"/><path d="M456.79999999999995 403.64 L463.4 400.24 H681" fill="none" stroke="#efefef" stroke-width=".8"/><path d="M456.79999999999995 411.48 L463.4 408.08 H681" fill="none" stroke="#efefef" stroke-width=".8"/><path d="M456.79999999999995 419.32 L463.4 415.92 H681" fill="none" stroke="#efefef" stroke-width=".8"/><path d="M456.79999999999995 427.16 L463.4 423.76 H681" fill="none" stroke="#efefef" stroke-width=".8"/><path d="M456.79999999999995 435.00 L463.4 431.60 H681" fill="none" stroke="#dcdcdc" stroke-width=".8"/><path d="M470.40 373.97 l2 -1.4 V434.40000000000003 l-2 1.4 Z" fill="url(#bg2)"/><path d="M463.40 373.97 l2 -1.4 h7 l-2 1.4 Z" fill="#5fae2f"/><rect x="463.40" y="373.97" width="7" height="61.83" fill="url(#bg1)"/><path d="M488.67 392.97 l2 -1.4 V434.40000000000003 l-2 1.4 Z" fill="url(#bg2)"/><path d="M481.67 392.97 l2 -1.4 h7 l-2 1.4 Z" fill="#5fae2f"/><rect x="481.67" y="392.97" width="7" height="42.83" fill="url(#bg1)"/><path d="M506.94 407.30 l2 -1.4 V434.40000000000003 l-2 1.4 Z" fill="url(#bg2)"/><path d="M499.94 407.30 l2 -1.4 h7 l-2 1.4 Z" fill="#5fae2f"/><rect x="499.94" y="407.30" width="7" height="28.50" fill="url(#bg1)"/><path d="M525.21 416.97 l2 -1.4 V434.40000000000003 l-2 1.4 Z" fill="url(#bg2)"/><path d="M518.21 416.97 l2 -1.4 h7 l-2 1.4 Z" fill="#5fae2f"/><rect x="518.21" y="416.97" width="7" height="18.83" fill="url(#bg1)"/><path d="M543.48 388.63 l2 -1.4 V434.40000000000003 l-2 1.4 Z" fill="url(#bg2)"/><path d="M536.48 388.63 l2 -1.4 h7 l-2 1.4 Z" fill="#5fae2f"/><rect x="536.48" y="388.63" width="7" height="47.17" fill="url(#bg1)"/><path d="M561.75 384.63 l2 -1.4 V434.40000000000003 l-2 1.4 Z" fill="url(#bg2)"/><path d="M554.75 384.63 l2 -1.4 h7 l-2 1.4 Z" fill="#5fae2f"/><rect x="554.75" y="384.63" width="7" height="51.17" fill="url(#bg1)"/><path d="M580.02 426.97 l2 -1.4 V434.40000000000003 l-2 1.4 Z" fill="url(#bg2)"/><path d="M573.02 426.97 l2 -1.4 h7 l-2 1.4 Z" fill="#5fae2f"/><rect x="573.02" y="426.97" width="7" height="8.83" fill="url(#bg1)"/><path d="M598.29 426.97 l2 -1.4 V434.40000000000003 l-2 1.4 Z" fill="url(#bg2)"/><path d="M591.29 426.97 l2 -1.4 h7 l-2 1.4 Z" fill="#5fae2f"/><rect x="591.29" y="426.97" width="7" height="8.83" fill="url(#bg1)"/><path d="M616.56 357.97 l2 -1.4 V434.40000000000003 l-2 1.4 Z" fill="url(#bg2)"/><path d="M609.56 357.97 l2 -1.4 h7 l-2 1.4 Z" fill="#5fae2f"/><rect x="609.56" y="357.97" width="7" height="77.83" fill="url(#bg1)"/><path d="M634.83 375.63 l2 -1.4 V434.40000000000003 l-2 1.4 Z" fill="url(#bg2)"/><path d="M627.83 375.63 l2 -1.4 h7 l-2 1.4 Z" fill="#5fae2f"/><rect x="627.83" y="375.63" width="7" height="60.17" fill="url(#bg1)"/><path d="M653.10 400.30 l2 -1.4 V434.40000000000003 l-2 1.4 Z" fill="url(#bg2)"/><path d="M646.10 400.30 l2 -1.4 h7 l-2 1.4 Z" fill="#5fae2f"/><rect x="646.10" y="400.30" width="7" height="35.50" fill="url(#bg1)"/><path d="M671.37 368.63 l2 -1.4 V434.40000000000003 l-2 1.4 Z" fill="url(#bg2)"/><path d="M664.37 368.63 l2 -1.4 h7 l-2 1.4 Z" fill="#5fae2f"/><rect x="664.37" y="368.63" width="7" height="67.17" fill="url(#bg1)"/></svg>
<div class="t" style="left:508.60px;top:324.09px;font-size:11px;color:#1787ae;letter-spacing:0.401px;-webkit-text-stroke:.5px #1787ae;">Monthly Sale</div>
<div class="t" style="left:405.34px;top:354.75px;font-size:8.8px;color:#7a7a7a;letter-spacing:0.139px;">$1,000.00</div>
<div class="t" style="left:413.28px;top:394.55px;font-size:8.8px;color:#7a7a7a;letter-spacing:0.084px;">$500.00</div>
<div class="t" style="left:437.78px;top:434.35px;font-size:8.8px;color:#7a7a7a;">$-</div>
<div class="t" style="left:462.44px;top:449.81px;font-size:9.2px;color:#6a6a6a;">1</div>
<div class="t" style="left:480.71px;top:449.81px;font-size:9.2px;color:#6a6a6a;">2</div>
<div class="t" style="left:498.98px;top:449.81px;font-size:9.2px;color:#6a6a6a;">3</div>
<div class="t" style="left:517.25px;top:449.81px;font-size:9.2px;color:#6a6a6a;">4</div>
<div class="t" style="left:535.52px;top:449.81px;font-size:9.2px;color:#6a6a6a;">5</div>
<div class="t" style="left:553.79px;top:449.81px;font-size:9.2px;color:#6a6a6a;">6</div>
<div class="t" style="left:572.06px;top:449.81px;font-size:9.2px;color:#6a6a6a;">7</div>
<div class="t" style="left:590.33px;top:449.81px;font-size:9.2px;color:#6a6a6a;">8</div>
<div class="t" style="left:608.60px;top:449.81px;font-size:9.2px;color:#6a6a6a;">9</div>
<div class="t" style="left:625.91px;top:449.81px;font-size:9.2px;color:#6a6a6a;">10</div>
<div class="t" style="left:644.52px;top:449.81px;font-size:9.2px;color:#6a6a6a;">11</div>
<div class="t" style="left:662.45px;top:449.81px;font-size:9.2px;color:#6a6a6a;">12</div>
<svg style="left:755px;top:345px" width="330" height="110" viewBox="755 345 330 110"><path d="M760 354.2H1074.4" stroke="#e2e2e2" stroke-width=".9"/><path d="M760 375.8H1074.4" stroke="#e2e2e2" stroke-width=".9"/><path d="M760 397.5H1074.4" stroke="#e2e2e2" stroke-width=".9"/><path d="M760 419.2H1074.4" stroke="#e2e2e2" stroke-width=".9"/><path d="M760 440.8H1074.4" stroke="#e2e2e2" stroke-width=".9"/><path d="M760.60 440.8v2.4" stroke="#d4d4d4" stroke-width=".8"/><path d="M785.75 440.8v2.4" stroke="#d4d4d4" stroke-width=".8"/><path d="M810.90 440.8v2.4" stroke="#d4d4d4" stroke-width=".8"/><path d="M836.05 440.8v2.4" stroke="#d4d4d4" stroke-width=".8"/><path d="M861.20 440.8v2.4" stroke="#d4d4d4" stroke-width=".8"/><path d="M886.35 440.8v2.4" stroke="#d4d4d4" stroke-width=".8"/><path d="M911.50 440.8v2.4" stroke="#d4d4d4" stroke-width=".8"/><path d="M936.65 440.8v2.4" stroke="#d4d4d4" stroke-width=".8"/><path d="M961.80 440.8v2.4" stroke="#d4d4d4" stroke-width=".8"/><path d="M986.95 440.8v2.4" stroke="#d4d4d4" stroke-width=".8"/><path d="M1012.10 440.8v2.4" stroke="#d4d4d4" stroke-width=".8"/><path d="M1037.25 440.8v2.4" stroke="#d4d4d4" stroke-width=".8"/><path d="M1062.40 440.8v2.4" stroke="#d4d4d4" stroke-width=".8"/><path d="M1087.55 440.8v2.4" stroke="#d4d4d4" stroke-width=".8"/><path d="M773.2 439.9 L797.9 416.1 L823.0 406.6 L848.5 421.3 L873.7 434.7 L898.8 424.8 L923.9 433.9 L949.1 429.1 L974.2 428.7 L999.3 429.5 L1024.5 399.7 L1049.6 417.0 L1074.3 424.4" fill="none" stroke="#7ed321" stroke-width="1.5" stroke-linejoin="round"/><path d="M773.2 439.9 L797.9 397.5 L823.0 378.0 L848.5 405.3 L873.7 431.3 L898.8 413.1 L923.9 433.0 L949.1 421.8 L974.2 418.3 L999.3 424.4 L1024.5 362.0 L1049.6 397.5 L1074.3 415.3" fill="none" stroke="#e8177d" stroke-width="1.5" stroke-linejoin="round"/><path d="M831.6 450.8H856.6" stroke="#7ed321" stroke-width="1.4"/><path d="M875.8 450.8H900.8" stroke="#e8177d" stroke-width="1.4"/></svg>
<div class="t" style="left:799.03px;top:324.26px;font-size:10.8px;color:#c9960c;letter-spacing:0.451px;-webkit-text-stroke:.45px #c9960c;">Dynamics of Sales and Gross margin</div>
<div class="t" style="left:704.10px;top:349.95px;font-size:8.8px;color:#7a7a7a;letter-spacing:0.096px;">$20,000.00</div>
<div class="t" style="left:704.10px;top:371.55px;font-size:8.8px;color:#7a7a7a;letter-spacing:0.096px;">$15,000.00</div>
<div class="t" style="left:704.10px;top:393.25px;font-size:8.8px;color:#7a7a7a;letter-spacing:0.096px;">$10,000.00</div>
<div class="t" style="left:709.09px;top:414.95px;font-size:8.8px;color:#7a7a7a;letter-spacing:0.095px;">$5,000.00</div>
<div class="t" style="left:741.18px;top:436.55px;font-size:8.8px;color:#7a7a7a;">$-</div>
<div class="t" style="left:770.70px;top:452.78px;font-size:9px;color:#6a6a6a;">1</div>
<div class="t" style="left:795.85px;top:452.78px;font-size:9px;color:#6a6a6a;">2</div>
<div class="t" style="left:821.00px;top:452.78px;font-size:9px;color:#6a6a6a;">3</div>
<div class="t" style="left:846.15px;top:452.78px;font-size:9px;color:#6a6a6a;">4</div>
<div class="t" style="left:871.30px;top:452.78px;font-size:9px;color:#6a6a6a;">5</div>
<div class="t" style="left:896.45px;top:452.78px;font-size:9px;color:#6a6a6a;">6</div>
<div class="t" style="left:921.60px;top:452.78px;font-size:9px;color:#6a6a6a;">7</div>
<div class="t" style="left:946.75px;top:452.78px;font-size:9px;color:#6a6a6a;">8</div>
<div class="t" style="left:971.90px;top:452.78px;font-size:9px;color:#6a6a6a;">9</div>
<div class="t" style="left:994.54px;top:452.78px;font-size:9px;color:#6a6a6a;">10</div>
<div class="t" style="left:1020.03px;top:452.78px;font-size:9px;color:#6a6a6a;">11</div>
<div class="t" style="left:1044.84px;top:452.78px;font-size:9px;color:#6a6a6a;">12</div>
<div class="t" style="left:1069.99px;top:452.78px;font-size:9px;color:#6a6a6a;">13</div>
<div class="t" style="left:857.60px;top:446.38px;font-size:9px;color:#7a7a7a;letter-spacing:-0.153px;">Sale</div>
<div class="t" style="left:902.40px;top:446.38px;font-size:9px;color:#7a7a7a;letter-spacing:0.132px;">Gross margin</div>
</body></html>
